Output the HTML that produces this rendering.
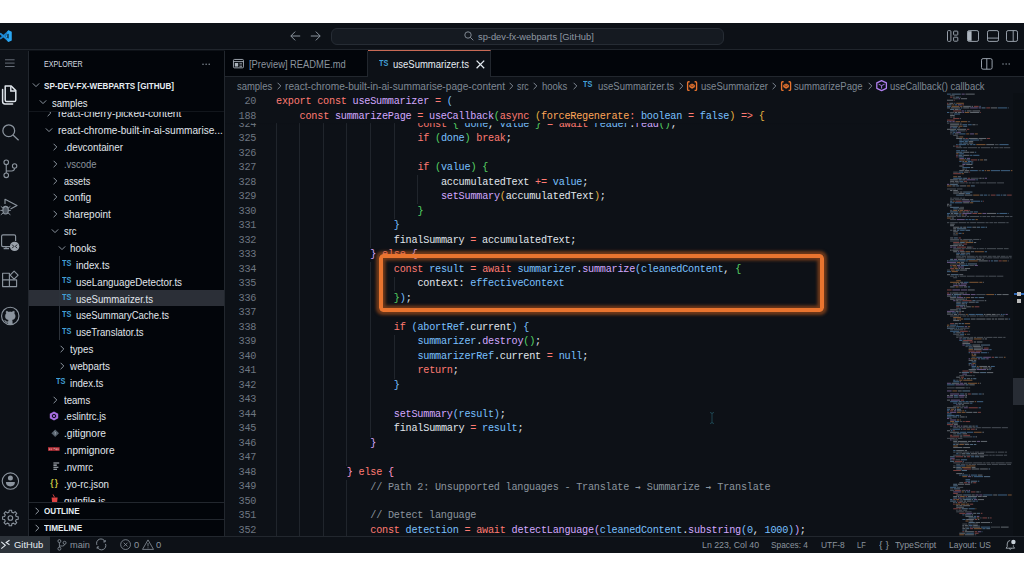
<!DOCTYPE html>
<html lang="en"><head><meta charset="utf-8"><title>useSummarizer.ts - sp-dev-fx-webparts [GitHub]</title>
<style>
html,body{margin:0;padding:0;background:#fff;}
body{width:1024px;height:576px;position:relative;overflow:hidden;font-family:"Liberation Sans",sans-serif;}
.abs{position:absolute;box-sizing:border-box;}
.t{position:absolute;white-space:pre;line-height:16px;height:16px;transform-origin:0 50%;}
.cl{position:absolute;white-space:pre;left:0;height:14.51px;line-height:14.51px;font-family:"Liberation Mono", monospace;font-size:10.20px;letter-spacing:-0.231px;color:#e0e6ec}
.ln{position:absolute;white-space:pre;text-align:right;width:40px;height:14.51px;line-height:14.51px;font-family:"Liberation Mono", monospace;font-size:10.20px;letter-spacing:-0.231px;color:#6e7681}
svg{position:absolute;overflow:visible}
.ar{display:inline-block;width:5.89px;letter-spacing:0;font-family:"DejaVu Sans Mono","Liberation Mono",monospace;font-size:9px;text-align:center;font-weight:700}
.k{color:#ff7b72}.f{color:#d2a8ff}.v{color:#79c0ff}.w{color:#e0e6ec}.p{color:#ffa657}.c{color:#8b949e}.b1{color:#79c0ff}.b2{color:#56d364}.b3{color:#e3b341}.b4{color:#ffa198}.b5{color:#ff9bce}.b6{color:#d2a8ff}</style></head>
<body>
<div class="abs" style="left:0;top:23.25px;width:1024px;height:529.25px;background:#0d1117"></div>
<div class="abs" style="left:0;top:23.25px;width:1024px;height:26.75px;background:#0d1117;border-bottom:1px solid #20252c"></div>
<div class="abs" style="left:28.50px;top:50.50px;width:195.50px;height:485.75px;background:#02050a"></div>
<div class="abs" style="left:28.00px;top:50.50px;width:1px;height:485.75px;background:#22272e"></div>
<div class="abs" style="left:223.50px;top:50.50px;width:1px;height:485.75px;background:#22272e"></div>
<div class="abs" style="left:224.50px;top:50.00px;width:800.00px;height:26.50px;background:#02050a;border-bottom:1px solid #22272e"></div>
<div class="abs" style="left:0;top:535.75px;width:1024px;height:16.75px;background:#0d1117;border-top:1px solid #22272e"></div>
<svg style="left:-1.20px;top:29.90px" width="13.10" height="12.30" viewBox="0 0 16 15" ><path d="M11.7 0.3 L0.4 10.2 L2.1 11.7 L12 4.1 Z" fill="#1b80c9"/><path d="M11.7 14.7 L0.4 4.8 L2.1 3.3 L12 10.9 Z" fill="#1f8fdc"/><path fill-rule="evenodd" d="M11.6 0.2 L15.6 2.1 V12.9 L11.6 14.8 L10.2 13.4 V1.6 Z M11.7 4.4 L7.6 7.5 L11.7 10.6 Z" fill="#2aa7f3"/></svg>
<svg style="left:289.70px;top:31.30px" width="11.00" height="10.00" viewBox="0 0 11 10" ><path d="M5.2 0.6 L0.8 5 L5.2 9.4 M0.9 5 H10.2" fill="none" stroke="#8b949e" stroke-width="1"/></svg>
<svg style="left:309.70px;top:31.30px" width="11.00" height="10.00" viewBox="0 0 11 10" ><path d="M5.8 0.6 L10.2 5 L5.8 9.4 M10.1 5 H0.8" fill="none" stroke="#8b949e" stroke-width="1"/></svg>
<div class="abs" style="left:331px;top:27.6px;width:393.2px;height:17.5px;border-radius:6px;background:#151a21;border:1px solid #262c34"></div>
<svg style="left:464.20px;top:30.70px" width="10.00" height="10.00" viewBox="0 0 10 10" ><circle cx="4" cy="4" r="3.2" fill="none" stroke="#8b949e" stroke-width="0.9"/><path d="M6.3 6.3 L9.3 9.3" stroke="#8b949e" stroke-width="0.9"/></svg>
<span class="t" style="left:478.00px;top:29.40px;font-size:9.60px;color:#8f98a2;transform:scaleX(0.9695);">sp-dev-fx-webparts [GitHub]</span>
<svg style="left:947.00px;top:30.00px" width="12.00" height="12.00" viewBox="0 0 12 12" ><rect x="0.5" y="0.6" width="3.4" height="10.8" rx="1" stroke="#9ea7b1" stroke-width="0.95" fill="none"/><rect x="6.6" y="1.1" width="4.2" height="4" rx="0.7" stroke="#9ea7b1" stroke-width="0.95" fill="none"/><rect x="6.6" y="7.2" width="4.2" height="4" rx="0.7" stroke="#9ea7b1" stroke-width="0.95" fill="none"/></svg>
<svg style="left:966.60px;top:30.00px" width="12.00" height="12.00" viewBox="0 0 12 12" ><rect x="0.5" y="0.6" width="11" height="10.8" rx="1.6" stroke="#9ea7b1" stroke-width="0.95" fill="none"/><path d="M0.8 1.2 H4.6 V10.8 H0.8 Z" fill="#aeb6bf"/></svg>
<svg style="left:986.60px;top:30.00px" width="12.00" height="12.00" viewBox="0 0 12 12" ><rect x="0.5" y="0.6" width="11" height="10.8" rx="1.6" stroke="#9ea7b1" stroke-width="0.95" fill="none"/><path d="M0.5 8.1 H11.5" stroke="#9ea7b1" stroke-width="0.95" fill="none"/></svg>
<svg style="left:1006.40px;top:30.00px" width="12.00" height="12.00" viewBox="0 0 12 12" ><rect x="0.5" y="0.6" width="11" height="10.8" rx="1.6" stroke="#9ea7b1" stroke-width="0.95" fill="none"/><path d="M7.2 0.6 V11.4" stroke="#9ea7b1" stroke-width="0.95" fill="none"/></svg>
<svg style="left:5.40px;top:58.00px" width="10.00" height="10.00" viewBox="0 0 10 10" ><path d="M0 1.8 H9.6 M0 5.1 H9.6 M0 8.5 H9.6" stroke="#7d8590" stroke-width="0.8"/></svg>
<svg style="left:0.20px;top:85.00px" width="18.00" height="20.00" viewBox="0 0 18 20" ><path d="M5.2 1 H11.2 L15.8 5.6 V15 Q15.8 16.6 14.2 16.6 H6.8 Q5.2 16.6 5.2 15 Z" fill="none" stroke="#dfe5eb" stroke-width="1.5" stroke-linejoin="round"/><path d="M10.8 1.2 V6 H15.6" fill="none" stroke="#dfe5eb" stroke-width="1.4"/><path d="M2.6 4.4 V16.6 Q2.6 19 5 19 H12.6" fill="none" stroke="#dfe5eb" stroke-width="1.5" stroke-linecap="round"/></svg>
<svg style="left:0.00px;top:122.00px" width="22.00" height="22.00" viewBox="0 0 22 22" ><circle cx="8.75" cy="8.7" r="5.9" fill="none" stroke="#8b949e" stroke-width="1.25"/><path d="M13 13 L18.6 18.2" stroke="#8b949e" stroke-width="1.25"/></svg>
<svg style="left:0.00px;top:158.00px" width="22.00" height="22.00" viewBox="0 0 22 22" ><circle cx="6.25" cy="4.3" r="2.3" fill="none" stroke="#8b949e" stroke-width="1.1"/><circle cx="6.25" cy="17.3" r="2.3" fill="none" stroke="#8b949e" stroke-width="1.1"/><circle cx="14.6" cy="8" r="2.2" fill="none" stroke="#8b949e" stroke-width="1.1"/><path d="M6.25 6.6 V15 M14.6 10.2 Q14.4 13 11.6 13 H6.3" fill="none" stroke="#8b949e" stroke-width="1.1"/></svg>
<svg style="left:0.00px;top:196.00px" width="22.00" height="22.00" viewBox="0 0 22 22" ><path d="M5 8 V3.2 L17 9.5 L10.5 13" fill="none" stroke="#8b949e" stroke-width="1.15" stroke-linejoin="round"/><ellipse cx="5.6" cy="14.2" rx="2.7" ry="3.8" fill="#4d555f" stroke="#8b949e" stroke-width="1.15"/><path d="M0.8 10.4 L3.2 12.2 M10.4 10.4 L8 12.2 M0.4 14.4 H2.9 M8.3 14.4 H10.8 M0.8 18.8 L3.3 16.8 M10.4 18.8 L7.9 16.8 M3.2 11.6 Q5.6 9.2 8 11.6" fill="none" stroke="#8b949e" stroke-width="1"/></svg>
<svg style="left:0.00px;top:232.00px" width="22.00" height="22.00" viewBox="0 0 22 22" ><path d="M10 14.6 H3 Q1.6 14.6 1.6 13.2 V4.2 Q1.6 2.8 3 2.8 H14.2 Q15.6 2.8 15.6 4.2 V9" fill="none" stroke="#8b949e" stroke-width="1.15"/><path d="M6 14.8 V16.4 M3.6 16.6 H9" stroke="#8b949e" stroke-width="1.1"/><circle cx="14.6" cy="14.4" r="4.7" fill="#9aa2ab"/><path d="M12.2 12.6 L13.8 14.4 L12.2 16.2 M17 12.6 L15.4 14.4 L17 16.2" fill="none" stroke="#0d1117" stroke-width="0.9"/></svg>
<svg style="left:0.00px;top:268.00px" width="22.00" height="22.00" viewBox="0 0 22 22" ><path d="M2.6 5.2 H9.4 V11.8 H16.6 V18.6 H2.6 Z M2.6 11.8 H9.4 V18.6" fill="none" stroke="#8b949e" stroke-width="1.15" stroke-linejoin="round"/><path d="M14.1 3.2 L18.1 7.2 L14.1 11.2 L10.1 7.2 Z" fill="none" stroke="#8b949e" stroke-width="1.15" stroke-linejoin="round"/></svg>
<svg style="left:0.00px;top:305.00px" width="22.00" height="22.00" viewBox="0 0 22 22" ><circle cx="10.25" cy="10.9" r="8.7" fill="none" stroke="#8b949e" stroke-width="1.1"/><path d="M6.3 6 Q7.6 6.1 8.6 7 Q10.25 6.6 11.9 7 Q12.9 6.1 14.2 6 Q14.7 7.4 14.3 8.6 Q15.3 9.8 15.3 11.3 Q15.3 14.6 11.9 14.9 Q12.4 15.5 12.4 16.4 V19.2 Q10.25 19.9 8.1 19.2 V17.6 Q5.9 18.1 5.2 16.4 Q4.9 15.7 4.3 15.3 Q5.3 15.1 5.9 16 Q6.7 17.1 8.1 16.6 Q8.2 15.5 8.6 14.9 Q5.2 14.6 5.2 11.3 Q5.2 9.8 6.2 8.6 Q5.8 7.4 6.3 6 Z" fill="#8b949e" stroke="#8b949e" stroke-width="0.3"/></svg>
<svg style="left:0.00px;top:470.00px" width="22.00" height="22.00" viewBox="0 0 22 22" ><circle cx="10.4" cy="11.1" r="8.2" fill="none" stroke="#8b949e" stroke-width="1.1"/><circle cx="10.4" cy="8.1" r="2.5" fill="#8b949e"/><path d="M5.9 12 H14.9 Q14.9 16.4 10.4 16.4 Q5.9 16.4 5.9 12 Z" fill="#8b949e"/></svg>
<svg style="left:0.00px;top:506.75px" width="22.00" height="22.00" viewBox="0 0 22 22" ><path d="M8.97 5.17 L9.22 3.19 L11.58 3.19 L11.83 5.17 L13.51 5.87 L15.09 4.64 L16.76 6.31 L15.53 7.89 L16.23 9.57 L18.21 9.82 L18.21 12.18 L16.23 12.43 L15.53 14.11 L16.76 15.69 L15.09 17.36 L13.51 16.13 L11.83 16.83 L11.58 18.81 L9.22 18.81 L8.97 16.83 L7.29 16.13 L5.71 17.36 L4.04 15.69 L5.27 14.11 L4.57 12.43 L2.59 12.18 L2.59 9.82 L4.57 9.57 L5.27 7.89 L4.04 6.31 L5.71 4.64 L7.29 5.87 Z" fill="none" stroke="#8b949e" stroke-width="1.1" stroke-linejoin="round"/><circle cx="10.40" cy="11.00" r="2.3" fill="none" stroke="#8b949e" stroke-width="1.1"/></svg>
<span class="t" style="left:44.00px;top:55.90px;font-size:9.00px;color:#d5dbe1;transform:scaleX(0.7903);">EXPLORER</span>
<svg style="left:202.00px;top:61.50px" width="10.00" height="5.00" viewBox="0 0 10 5" ><circle cx="1" cy="2.3" r="0.75" fill="#8b949e"/><circle cx="4.1" cy="2.3" r="0.75" fill="#8b949e"/><circle cx="7.2" cy="2.3" r="0.75" fill="#8b949e"/></svg>
<svg style="left:32.20px;top:81.20px" width="8.00" height="8.00" viewBox="0 0 8 8" ><path d="M0.8 2.4 L4 5.6 L7.2 2.4" fill="none" stroke="#8b949e" stroke-width="1.0"/></svg>
<span class="t" style="left:44.00px;top:77.80px;font-size:8.60px;color:#e6edf3;font-weight:700;transform:scaleX(0.9432);">SP-DEV-FX-WEBPARTS [GITHUB]</span>
<svg style="left:39.30px;top:97.80px" width="8.00" height="8.00" viewBox="0 0 8 8" ><path d="M0.8 2.4 L4 5.6 L7.2 2.4" fill="none" stroke="#8b949e" stroke-width="1.0"/></svg>
<span class="t" style="left:51.50px;top:96.00px;font-size:10.00px;color:#e6edf3;transform:scaleX(0.9530);">samples</span>
<div class="abs" style="left:28.50px;top:110.7px;width:195.00px;height:391.80px;overflow:hidden;border-top:1px solid #12161c">
<div class="abs" style="left:0;top:178.30px;width:196px;height:16.5px;background:#2b2f37"></div>
<div class="abs" style="left:30.90px;top:144.80px;width:1px;height:83.50px;background:#2c323a"></div>
<span class="t" style="left:29.25px;top:-5.40px;font-size:10.00px;color:#e0e6ec;transform:scaleX(1.0126);">react-cherry-picked-content</span>
<svg style="left:16.65px;top:-2.40px" width="8.00" height="8.00" viewBox="0 0 8 8" ><path d="M2.6 0.8 L5.8 4 L2.6 7.2" fill="none" stroke="#8b949e" stroke-width="1.0"/></svg>
<span class="t" style="left:29.25px;top:11.44px;font-size:10.00px;color:#e0e6ec;transform:scaleX(1.0084);">react-chrome-built-in-ai-summarise...</span>
<svg style="left:16.65px;top:14.34px" width="8.00" height="8.00" viewBox="0 0 8 8" ><path d="M0.8 2.4 L4 5.6 L7.2 2.4" fill="none" stroke="#8b949e" stroke-width="1.0"/></svg>
<span class="t" style="left:35.50px;top:28.28px;font-size:10.00px;color:#e0e6ec;transform:scaleX(0.9826);">.devcontainer</span>
<svg style="left:22.90px;top:31.28px" width="8.00" height="8.00" viewBox="0 0 8 8" ><path d="M2.6 0.8 L5.8 4 L2.6 7.2" fill="none" stroke="#8b949e" stroke-width="1.0"/></svg>
<span class="t" style="left:35.50px;top:45.12px;font-size:10.00px;color:#8b949e;transform:scaleX(0.9429);">.vscode</span>
<svg style="left:22.90px;top:48.12px" width="8.00" height="8.00" viewBox="0 0 8 8" ><path d="M2.6 0.8 L5.8 4 L2.6 7.2" fill="none" stroke="#8b949e" stroke-width="1.0"/></svg>
<span class="t" style="left:35.50px;top:61.96px;font-size:10.00px;color:#e0e6ec;transform:scaleX(0.9064);">assets</span>
<svg style="left:22.90px;top:64.96px" width="8.00" height="8.00" viewBox="0 0 8 8" ><path d="M2.6 0.8 L5.8 4 L2.6 7.2" fill="none" stroke="#8b949e" stroke-width="1.0"/></svg>
<span class="t" style="left:35.50px;top:78.80px;font-size:10.00px;color:#e0e6ec;transform:scaleX(1.0192);">config</span>
<svg style="left:22.90px;top:81.80px" width="8.00" height="8.00" viewBox="0 0 8 8" ><path d="M2.6 0.8 L5.8 4 L2.6 7.2" fill="none" stroke="#8b949e" stroke-width="1.0"/></svg>
<span class="t" style="left:35.50px;top:95.64px;font-size:10.00px;color:#e0e6ec;transform:scaleX(1.0021);">sharepoint</span>
<svg style="left:22.90px;top:98.64px" width="8.00" height="8.00" viewBox="0 0 8 8" ><path d="M2.6 0.8 L5.8 4 L2.6 7.2" fill="none" stroke="#8b949e" stroke-width="1.0"/></svg>
<span class="t" style="left:35.50px;top:112.48px;font-size:10.00px;color:#e0e6ec;transform:scaleX(0.9368);">src</span>
<svg style="left:22.90px;top:115.38px" width="8.00" height="8.00" viewBox="0 0 8 8" ><path d="M0.8 2.4 L4 5.6 L7.2 2.4" fill="none" stroke="#8b949e" stroke-width="1.0"/></svg>
<span class="t" style="left:41.75px;top:129.32px;font-size:10.00px;color:#e0e6ec;transform:scaleX(0.9836);">hooks</span>
<svg style="left:29.15px;top:132.22px" width="8.00" height="8.00" viewBox="0 0 8 8" ><path d="M0.8 2.4 L4 5.6 L7.2 2.4" fill="none" stroke="#8b949e" stroke-width="1.0"/></svg>
<span class="t" style="left:47.50px;top:146.16px;font-size:10.00px;color:#e0e6ec;transform:scaleX(0.9719);">index.ts</span>
<span class="t" style="left:33.30px;top:144.76px;font-size:8.2px;font-weight:700;color:#419fd6;transform:scaleX(0.9)">TS</span>
<span class="t" style="left:47.50px;top:163.00px;font-size:10.00px;color:#e0e6ec;transform:scaleX(0.9777);">useLanguageDetector.ts</span>
<span class="t" style="left:33.30px;top:161.60px;font-size:8.2px;font-weight:700;color:#419fd6;transform:scaleX(0.9)">TS</span>
<span class="t" style="left:47.50px;top:179.84px;font-size:10.00px;color:#e0e6ec;transform:scaleX(0.9621);">useSummarizer.ts</span>
<span class="t" style="left:33.30px;top:178.44px;font-size:8.2px;font-weight:700;color:#419fd6;transform:scaleX(0.9)">TS</span>
<span class="t" style="left:47.50px;top:196.68px;font-size:10.00px;color:#e0e6ec;transform:scaleX(0.9454);">useSummaryCache.ts</span>
<span class="t" style="left:33.30px;top:195.28px;font-size:8.2px;font-weight:700;color:#419fd6;transform:scaleX(0.9)">TS</span>
<span class="t" style="left:47.50px;top:213.52px;font-size:10.00px;color:#e0e6ec;transform:scaleX(0.9536);">useTranslator.ts</span>
<span class="t" style="left:33.30px;top:212.12px;font-size:8.2px;font-weight:700;color:#419fd6;transform:scaleX(0.9)">TS</span>
<span class="t" style="left:41.75px;top:230.36px;font-size:10.00px;color:#e0e6ec;transform:scaleX(0.9725);">types</span>
<svg style="left:29.15px;top:233.36px" width="8.00" height="8.00" viewBox="0 0 8 8" ><path d="M2.6 0.8 L5.8 4 L2.6 7.2" fill="none" stroke="#8b949e" stroke-width="1.0"/></svg>
<span class="t" style="left:41.75px;top:247.20px;font-size:10.00px;color:#e0e6ec;transform:scaleX(0.9870);">webparts</span>
<svg style="left:29.15px;top:250.20px" width="8.00" height="8.00" viewBox="0 0 8 8" ><path d="M2.6 0.8 L5.8 4 L2.6 7.2" fill="none" stroke="#8b949e" stroke-width="1.0"/></svg>
<span class="t" style="left:41.75px;top:264.04px;font-size:10.00px;color:#e0e6ec;transform:scaleX(0.9646);">index.ts</span>
<span class="t" style="left:27.55px;top:262.64px;font-size:8.2px;font-weight:700;color:#419fd6;transform:scaleX(0.9)">TS</span>
<span class="t" style="left:35.50px;top:280.88px;font-size:10.00px;color:#e0e6ec;transform:scaleX(0.9620);">teams</span>
<svg style="left:22.90px;top:283.88px" width="8.00" height="8.00" viewBox="0 0 8 8" ><path d="M2.6 0.8 L5.8 4 L2.6 7.2" fill="none" stroke="#8b949e" stroke-width="1.0"/></svg>
<span class="t" style="left:35.50px;top:297.72px;font-size:10.00px;color:#e0e6ec;transform:scaleX(0.9448);">.eslintrc.js</span>
<svg style="left:20.90px;top:299.72px" width="10.00" height="10.00" viewBox="0 0 10 10" ><path d="M5 0.4 L9.2 2.8 V7.2 L5 9.6 L0.8 7.2 V2.8 Z" fill="#a76ee0"/><path d="M5 2.7 L7.1 3.9 V6.1 L5 7.3 L2.9 6.1 V3.9 Z" fill="#02050a"/><path d="M5 3.7 L6.2 4.4 V5.6 L5 6.3 L3.8 5.6 V4.4 Z" fill="#a76ee0"/></svg>
<span class="t" style="left:35.50px;top:314.56px;font-size:10.00px;color:#e0e6ec;transform:scaleX(1.0209);">.gitignore</span>
<svg style="left:22.10px;top:317.16px" width="9.00" height="9.00" viewBox="0 0 9 9" ><path d="M4.2 0.4 L8 4.2 L4.2 8 L0.4 4.2 Z" fill="#56616c"/><path d="M3.4 2.6 L5 4.2 M4.2 3.4 V5.8" stroke="#b6bec7" stroke-width="0.6"/></svg>
<span class="t" style="left:35.50px;top:331.40px;font-size:10.00px;color:#e0e6ec;transform:scaleX(1.0094);">.npmignore</span>
<svg style="left:19.50px;top:335.10px" width="12.00" height="5.00" viewBox="0 0 12 5" ><rect x="0" y="0.2" width="11.6" height="3.6" fill="#b93139"/><path d="M1.6 1.4 V3.2 M3.2 1.4 V3.2 M5.4 1.4 H7 V3 M8.6 1.4 V3.2 M10 1.4 V3.2" stroke="#f3c6c8" stroke-width="0.6"/></svg>
<span class="t" style="left:35.50px;top:348.24px;font-size:10.00px;color:#e0e6ec;transform:scaleX(0.9667);">.nvmrc</span>
<svg style="left:24.10px;top:350.44px" width="8.00" height="9.00" viewBox="0 0 8 9" ><path d="M0.4 1 H6.2 M0.4 3.1 H3.8 M0.4 5.2 H5.4 M0.4 7.3 H4" stroke="#b9c0c8" stroke-width="1.05"/></svg>
<span class="t" style="left:35.50px;top:365.08px;font-size:10.00px;color:#e0e6ec;transform:scaleX(0.9756);">.yo-rc.json</span>
<span class="t" style="left:21.70px;top:363.38px;font-size:8.4px;font-weight:700;color:#c9c540;letter-spacing:1.3px">{}</span>
<span class="t" style="left:35.50px;top:381.92px;font-size:10.00px;color:#e0e6ec;transform:scaleX(0.9951);">gulpfile.js</span>
<svg style="left:22.30px;top:382.12px" width="8.00" height="12.00" viewBox="0 0 8 12" ><path d="M0.6 3.6 H6.6 L5.8 11 H1.4 Z" fill="#e04444"/><path d="M3.6 3.4 L2 0.4" stroke="#e04444" stroke-width="0.9"/></svg>
</div>
<div class="abs" style="left:28.50px;top:502px;width:195.50px;height:1px;background:#22272e"></div>
<div class="abs" style="left:28.50px;top:519px;width:195.50px;height:1px;background:#22272e"></div>
<svg style="left:32.60px;top:507.20px" width="8.00" height="8.00" viewBox="0 0 8 8" ><path d="M2.6 0.8 L5.8 4 L2.6 7.2" fill="none" stroke="#9aa2ab" stroke-width="1.0"/></svg>
<span class="t" style="left:43.75px;top:503.40px;font-size:8.60px;color:#e6edf3;font-weight:700;transform:scaleX(0.9425);">OUTLINE</span>
<svg style="left:32.60px;top:524.20px" width="8.00" height="8.00" viewBox="0 0 8 8" ><path d="M2.6 0.8 L5.8 4 L2.6 7.2" fill="none" stroke="#9aa2ab" stroke-width="1.0"/></svg>
<span class="t" style="left:43.75px;top:520.40px;font-size:8.60px;color:#e6edf3;font-weight:700;transform:scaleX(0.9536);">TIMELINE</span>
<svg style="left:233.00px;top:59.00px" width="11.00" height="9.50" viewBox="0 0 11 9.5" ><rect x="0.45" y="0.45" width="10" height="8.4" rx="1" fill="none" stroke="#aab2bb" stroke-width="0.9"/><path d="M0.5 2.6 H10.4" stroke="#aab2bb" stroke-width="0.9"/><rect x="1.8" y="4" width="3.4" height="3.6" fill="#aab2bb"/><path d="M6.4 4.4 H9 M6.4 6 H9 M6.4 7.5 H9" stroke="#aab2bb" stroke-width="0.7"/></svg>
<span class="t" style="left:248.75px;top:57.20px;font-size:10.00px;color:#8b949e;transform:scaleX(0.9361);">[Preview] README.md</span>
<div class="abs" style="left:367px;top:50.50px;width:1px;height:26.10px;background:#22272e"></div>
<div class="abs" style="left:367.75px;top:49.90px;width:123.5px;height:26.70px;background:#0d1117;border-top:1px solid #c96a55;border-right:1px solid #22272e"></div>
<span class="t" style="left:378.6px;top:56.1px;font-size:8.2px;font-weight:700;color:#419fd6;transform:scaleX(0.9)">TS</span>
<span class="t" style="left:393.00px;top:57.20px;font-size:10.00px;color:#e6edf3;transform:scaleX(0.9496);">useSummarizer.ts</span>
<svg style="left:476.00px;top:59.80px" width="9.00" height="9.00" viewBox="0 0 9 9" ><path d="M0.6 0.6 L8.2 8.2 M8.2 0.6 L0.6 8.2" stroke="#e6edf3" stroke-width="1.25"/></svg>
<svg style="left:981.00px;top:58.00px" width="12.00" height="12.00" viewBox="0 0 12 12" ><rect x="0.5" y="0.6" width="10.6" height="10.6" rx="1.6" fill="none" stroke="#9ea7b1" stroke-width="0.95"/><path d="M5.8 0.6 V11.2" stroke="#9ea7b1" stroke-width="0.95"/></svg>
<svg style="left:1002.00px;top:61.50px" width="10.00" height="5.00" viewBox="0 0 10 5" ><circle cx="1" cy="2.1" r="0.75" fill="#8b949e"/><circle cx="4.1" cy="2.1" r="0.75" fill="#8b949e"/><circle cx="7.2" cy="2.1" r="0.75" fill="#8b949e"/></svg>
<span class="t" style="left:236.50px;top:78.90px;font-size:10.00px;color:#7f8893;transform:scaleX(0.9450);">samples</span>
<svg style="left:274.60px;top:82.30px" width="8.00" height="8.00" viewBox="0 0 8 8" ><path d="M2.6 0.8 L5.8 4 L2.6 7.2" fill="none" stroke="#7f8893" stroke-width="1.0"/></svg>
<span class="t" style="left:284.50px;top:78.90px;font-size:10.00px;color:#7f8893;transform:scaleX(1.0150);">react-chrome-built-in-ai-summarise-page-content</span>
<svg style="left:507.00px;top:82.30px" width="8.00" height="8.00" viewBox="0 0 8 8" ><path d="M2.6 0.8 L5.8 4 L2.6 7.2" fill="none" stroke="#7f8893" stroke-width="1.0"/></svg>
<span class="t" style="left:517.00px;top:78.90px;font-size:10.00px;color:#7f8893;transform:scaleX(0.8768);">src</span>
<svg style="left:531.30px;top:82.30px" width="8.00" height="8.00" viewBox="0 0 8 8" ><path d="M2.6 0.8 L5.8 4 L2.6 7.2" fill="none" stroke="#7f8893" stroke-width="1.0"/></svg>
<span class="t" style="left:542.40px;top:78.90px;font-size:10.00px;color:#7f8893;transform:scaleX(0.9499);">hooks</span>
<svg style="left:571.00px;top:82.30px" width="8.00" height="8.00" viewBox="0 0 8 8" ><path d="M2.6 0.8 L5.8 4 L2.6 7.2" fill="none" stroke="#7f8893" stroke-width="1.0"/></svg>
<span class="t" style="left:583.4px;top:77.20px;font-size:8.2px;font-weight:700;color:#419fd6;transform:scaleX(0.9)">TS</span>
<span class="t" style="left:597.80px;top:78.90px;font-size:10.00px;color:#7f8893;transform:scaleX(0.9509);">useSummarizer.ts</span>
<svg style="left:676.60px;top:82.30px" width="8.00" height="8.00" viewBox="0 0 8 8" ><path d="M2.6 0.8 L5.8 4 L2.6 7.2" fill="none" stroke="#7f8893" stroke-width="1.0"/></svg>
<svg style="left:687.40px;top:80.90px" width="10.40" height="10.40" viewBox="0 0 10.4 10.4" ><path d="M2.6 0.8 H1.6 Q0.6 0.8 0.6 1.8 V8.4 Q0.6 9.4 1.6 9.4 H2.6 M7.6 0.8 H8.6 Q9.6 0.8 9.6 1.8 V8.4 Q9.6 9.4 8.6 9.4 H7.6" fill="none" stroke="#e8732e" stroke-width="1.35"/><path d="M5.1 2.9 L7.6 4.1 V6.1 L5.1 7.4 L2.6 6.1 V4.1 Z" fill="#e8732e" stroke="#e8732e" stroke-width="0.6" stroke-linejoin="round"/><path d="M3.4 4.6 L5.1 5.4 L6.8 4.6" fill="none" stroke="#0d1117" stroke-width="0.6"/></svg>
<span class="t" style="left:700.60px;top:78.90px;font-size:10.00px;color:#7f8893;transform:scaleX(0.9567);">useSummarizer</span>
<svg style="left:770.20px;top:82.30px" width="8.00" height="8.00" viewBox="0 0 8 8" ><path d="M2.6 0.8 L5.8 4 L2.6 7.2" fill="none" stroke="#7f8893" stroke-width="1.0"/></svg>
<svg style="left:781.10px;top:80.90px" width="10.40" height="10.40" viewBox="0 0 10.4 10.4" ><path d="M2.6 0.8 H1.6 Q0.6 0.8 0.6 1.8 V8.4 Q0.6 9.4 1.6 9.4 H2.6 M7.6 0.8 H8.6 Q9.6 0.8 9.6 1.8 V8.4 Q9.6 9.4 8.6 9.4 H7.6" fill="none" stroke="#e8732e" stroke-width="1.35"/><path d="M5.1 2.9 L7.6 4.1 V6.1 L5.1 7.4 L2.6 6.1 V4.1 Z" fill="#e8732e" stroke="#e8732e" stroke-width="0.6" stroke-linejoin="round"/><path d="M3.4 4.6 L5.1 5.4 L6.8 4.6" fill="none" stroke="#0d1117" stroke-width="0.6"/></svg>
<span class="t" style="left:794.30px;top:78.90px;font-size:10.00px;color:#7f8893;transform:scaleX(0.9479);">summarizePage</span>
<svg style="left:866.00px;top:82.30px" width="8.00" height="8.00" viewBox="0 0 8 8" ><path d="M2.6 0.8 L5.8 4 L2.6 7.2" fill="none" stroke="#7f8893" stroke-width="1.0"/></svg>
<svg style="left:875.80px;top:80.30px" width="11.40" height="11.60" viewBox="0 0 11.4 11.6" ><path d="M5.6 0.7 L10.4 2.9 V8.3 L5.6 10.7 L0.8 8.3 V2.9 Z" fill="none" stroke="#b180f0" stroke-width="1.3" stroke-linejoin="round"/><path d="M2.6 4.2 L5.6 5.6 L8.6 4.2 M5.6 5.6 V8.6" fill="none" stroke="#b180f0" stroke-width="0.9"/></svg>
<span class="t" style="left:890.00px;top:78.90px;font-size:10.00px;color:#7f8893;transform:scaleX(0.9456);">useCallback() callback</span>
<div class="abs" style="left:224.50px;top:122.70px;width:722.00px;height:413.05px;overflow:hidden">
<div class="abs" style="left:51.25px;top:-5.31px;width:1px;height:9794.25px;background:#20252c"></div>
<div class="abs" style="left:74.81px;top:-5.31px;width:1px;height:9794.25px;background:#20252c"></div>
<div class="abs" style="left:98.37px;top:-5.31px;width:1px;height:9794.25px;background:#20252c"></div>
<div class="abs" style="left:121.93px;top:-5.31px;width:1px;height:348.24px;background:#20252c"></div>
<div class="abs" style="left:121.93px;top:357.44px;width:1px;height:9431.50px;background:#20252c"></div>
<div class="abs" style="left:145.49px;top:-5.31px;width:1px;height:130.59px;background:#20252c"></div>
<div class="abs" style="left:145.49px;top:139.79px;width:1px;height:174.12px;background:#20252c"></div>
<div class="abs" style="left:169.05px;top:-5.31px;width:1px;height:101.57px;background:#20252c"></div>
<div class="abs" style="left:169.05px;top:154.30px;width:1px;height:14.51px;background:#20252c"></div>
<div class="abs" style="left:169.05px;top:212.33px;width:1px;height:43.53px;background:#20252c"></div>
<div class="abs" style="left:192.61px;top:52.73px;width:1px;height:29.02px;background:#20252c"></div>
<div class="ln" style="left:-8.30px;top:-5.01px">324</div>
<div class="cl" style="left:192.91px;top:-5.01px"><span class="k">const</span> <span class="b2">{</span> <span class="v">done</span>, <span class="v">value</span> <span class="b2">}</span> <span class="k">=</span> <span class="k">await</span> <span class="v">reader</span>.<span class="f">read</span><span class="b2">()</span>;</div>
<div class="ln" style="left:-8.30px;top:9.50px">325</div>
<div class="cl" style="left:192.91px;top:9.50px"><span class="k">if</span> <span class="b2">(</span><span class="v">done</span><span class="b2">)</span> <span class="k">break</span>;</div>
<div class="ln" style="left:-8.30px;top:24.00px">326</div>
<div class="ln" style="left:-8.30px;top:38.52px">327</div>
<div class="cl" style="left:192.91px;top:38.52px"><span class="k">if</span> <span class="b2">(</span><span class="v">value</span><span class="b2">)</span> <span class="b2">{</span></div>
<div class="ln" style="left:-8.30px;top:53.03px">328</div>
<div class="cl" style="left:216.47px;top:53.03px">accumulatedText <span class="k">+=</span> <span class="v">value</span>;</div>
<div class="ln" style="left:-8.30px;top:67.53px">329</div>
<div class="cl" style="left:216.47px;top:67.53px"><span class="f">setSummary</span><span class="b3">(</span>accumulatedText<span class="b3">)</span>;</div>
<div class="ln" style="left:-8.30px;top:82.04px">330</div>
<div class="cl" style="left:192.91px;top:82.04px"><span class="b2">}</span></div>
<div class="ln" style="left:-8.30px;top:96.56px">331</div>
<div class="cl" style="left:169.35px;top:96.56px"><span class="b1">}</span></div>
<div class="ln" style="left:-8.30px;top:111.06px">332</div>
<div class="cl" style="left:169.35px;top:111.06px">finalSummary <span class="k">=</span> accumulatedText;</div>
<div class="ln" style="left:-8.30px;top:125.58px">333</div>
<div class="cl" style="left:145.79px;top:125.58px"><span class="b6">}</span> <span class="k">else</span> <span class="b6">{</span></div>
<div class="ln" style="left:-8.30px;top:140.09px">334</div>
<div class="cl" style="left:169.35px;top:140.09px"><span class="k">const</span> <span class="v">result</span> <span class="k">=</span> <span class="k">await</span> <span class="v">summarizer</span>.<span class="f">summarize</span><span class="b1">(</span><span class="v">cleanedContent</span>, <span class="b2">{</span></div>
<div class="ln" style="left:-8.30px;top:154.60px">335</div>
<div class="cl" style="left:192.91px;top:154.60px">context: <span class="v">effectiveContext</span></div>
<div class="ln" style="left:-8.30px;top:169.11px">336</div>
<div class="cl" style="left:169.35px;top:169.11px"><span class="b2">}</span><span class="b1">)</span>;</div>
<div class="ln" style="left:-8.30px;top:183.62px">337</div>
<div class="ln" style="left:-8.30px;top:198.12px">338</div>
<div class="cl" style="left:169.35px;top:198.12px"><span class="k">if</span> <span class="b1">(</span><span class="v">abortRef</span>.current<span class="b1">)</span> <span class="b1">{</span></div>
<div class="ln" style="left:-8.30px;top:212.63px">339</div>
<div class="cl" style="left:192.91px;top:212.63px"><span class="v">summarizer</span>.<span class="f">destroy</span><span class="b2">()</span>;</div>
<div class="ln" style="left:-8.30px;top:227.15px">340</div>
<div class="cl" style="left:192.91px;top:227.15px"><span class="v">summarizerRef</span>.current <span class="k">=</span> <span class="v">null</span>;</div>
<div class="ln" style="left:-8.30px;top:241.66px">341</div>
<div class="cl" style="left:192.91px;top:241.66px"><span class="k">return</span>;</div>
<div class="ln" style="left:-8.30px;top:256.17px">342</div>
<div class="cl" style="left:169.35px;top:256.17px"><span class="b1">}</span></div>
<div class="ln" style="left:-8.30px;top:270.68px">343</div>
<div class="ln" style="left:-8.30px;top:285.19px">344</div>
<div class="cl" style="left:169.35px;top:285.19px"><span class="f">setSummary</span><span class="b1">(</span><span class="v">result</span><span class="b1">)</span>;</div>
<div class="ln" style="left:-8.30px;top:299.70px">345</div>
<div class="cl" style="left:169.35px;top:299.70px">finalSummary <span class="k">=</span> <span class="v">result</span>;</div>
<div class="ln" style="left:-8.30px;top:314.21px">346</div>
<div class="cl" style="left:145.79px;top:314.21px"><span class="b6">}</span></div>
<div class="ln" style="left:-8.30px;top:328.72px">347</div>
<div class="ln" style="left:-8.30px;top:343.23px">348</div>
<div class="cl" style="left:122.23px;top:343.23px"><span class="b5">}</span> <span class="k">else</span> <span class="b5">{</span></div>
<div class="ln" style="left:-8.30px;top:357.74px">349</div>
<div class="cl" style="left:145.79px;top:357.74px"><span class="c">// Path 2: Unsupported languages - Translate <span class="ar">→</span> Summarize <span class="ar">→</span> Translate</span></div>
<div class="ln" style="left:-8.30px;top:372.25px">350</div>
<div class="ln" style="left:-8.30px;top:386.75px">351</div>
<div class="cl" style="left:145.79px;top:386.75px"><span class="c">// Detect language</span></div>
<div class="ln" style="left:-8.30px;top:401.26px">352</div>
<div class="cl" style="left:145.79px;top:401.26px"><span class="k">const</span> <span class="v">detection</span> <span class="k">=</span> <span class="k">await</span> <span class="f">detectLanguage</span><span class="b6">(</span><span class="v">cleanedContent</span>.<span class="f">substring</span><span class="b1">(</span><span class="v">0</span>, <span class="v">1000</span><span class="b1">)</span><span class="b6">)</span>;</div>
</div>
<div class="abs" style="left:224.50px;top:122.70px;width:722.00px;height:2.5px;background:linear-gradient(rgba(1,4,9,0.12),rgba(1,4,9,0))"></div>
<div class="ln" style="left:216.20px;top:94.64px">20</div>
<div class="cl" style="left:276.05px;top:94.64px"><span class="k">export</span> <span class="k">const</span> <span class="f">useSummarizer</span> <span class="k">=</span> <span class="b1">(</span></div>
<div class="ln" style="left:216.20px;top:109.84px">188</div>
<div class="cl" style="left:299.61px;top:109.84px"><span class="k">const</span> <span class="f">summarizePage</span> <span class="k">=</span> <span class="f">useCallback</span><span class="b2">(</span><span class="k">async</span> <span class="b3">(</span><span class="p">forceRegenerate</span><span class="k">:</span> <span class="v">boolean</span> <span class="k">=</span> <span class="v">false</span><span class="b3">)</span> <span class="k">=&gt;</span> <span class="b3">{</span></div>
<div class="abs" style="left:378.7px;top:254px;width:445.6px;height:58.2px;border:4px solid #e9742f;border-radius:4.5px;box-shadow:0 0 3px 2.2px rgba(205,95,30,0.5),inset 0 0 3px 2.6px rgba(205,95,30,0.5)"></div>
<svg style="left:946.00px;top:93.00px" width="67.00" height="443.00" viewBox="0 0 67 443" ><g opacity="0.44"><rect x="1.0" y="0.60" width="3.9" height="1.05" fill="#79c0ff"/><rect x="5.6" y="0.60" width="9.2" height="1.05" fill="#a5d6ff"/><rect x="15.6" y="0.60" width="3.1" height="1.05" fill="#d2a8ff"/><rect x="19.5" y="0.60" width="9.2" height="1.05" fill="#c9d1d9"/><rect x="4.1" y="2.13" width="4.6" height="1.05" fill="#8b949e"/><rect x="4.1" y="3.66" width="2.3" height="1.05" fill="#ff7b72"/><rect x="7.2" y="3.66" width="1.5" height="1.05" fill="#c9d1d9"/><rect x="9.5" y="3.66" width="3.9" height="1.05" fill="#a5d6ff"/><rect x="14.1" y="3.66" width="0.8" height="1.05" fill="#8b949e"/><rect x="7.2" y="5.19" width="4.6" height="1.05" fill="#8b949e"/><rect x="12.5" y="5.19" width="1.5" height="1.05" fill="#d2a8ff"/><rect x="14.9" y="5.19" width="6.2" height="1.05" fill="#c9d1d9"/><rect x="1.0" y="6.72" width="6.2" height="1.05" fill="#c9d1d9"/><rect x="7.9" y="6.72" width="0.8" height="1.05" fill="#ff7b72"/><rect x="1.0" y="9.78" width="1.5" height="1.05" fill="#ff7b72"/><rect x="3.3" y="9.78" width="3.9" height="1.05" fill="#c9d1d9"/><rect x="7.9" y="9.78" width="1.5" height="1.05" fill="#8b949e"/><rect x="10.2" y="9.78" width="7.7" height="1.05" fill="#ffa657"/><rect x="1.0" y="11.31" width="4.6" height="1.05" fill="#c9d1d9"/><rect x="6.4" y="11.31" width="1.5" height="1.05" fill="#ffa657"/><rect x="8.7" y="11.31" width="2.3" height="1.05" fill="#79c0ff"/><rect x="11.8" y="11.31" width="3.9" height="1.05" fill="#d2a8ff"/><rect x="16.4" y="11.31" width="1.5" height="1.05" fill="#ff7b72"/><rect x="1.0" y="12.84" width="3.9" height="1.05" fill="#79c0ff"/><rect x="5.6" y="12.84" width="7.7" height="1.05" fill="#ffa657"/><rect x="14.1" y="12.84" width="2.3" height="1.05" fill="#ffa657"/><rect x="17.2" y="12.84" width="7.7" height="1.05" fill="#c9d1d9"/><rect x="25.6" y="12.84" width="1.5" height="1.05" fill="#c9d1d9"/><rect x="28.0" y="12.84" width="4.6" height="1.05" fill="#ff7b72"/><rect x="33.3" y="12.84" width="1.5" height="1.05" fill="#79c0ff"/><rect x="1.0" y="14.37" width="3.1" height="1.05" fill="#c9d1d9"/><rect x="4.9" y="14.37" width="9.2" height="1.05" fill="#c9d1d9"/><rect x="14.9" y="14.37" width="1.5" height="1.05" fill="#a5d6ff"/><rect x="17.2" y="14.37" width="6.2" height="1.05" fill="#c9d1d9"/><rect x="24.1" y="14.37" width="7.7" height="1.05" fill="#d2a8ff"/><rect x="32.6" y="14.37" width="2.3" height="1.05" fill="#d2a8ff"/><rect x="35.6" y="14.37" width="3.9" height="1.05" fill="#a5d6ff"/><rect x="40.3" y="14.37" width="3.9" height="1.05" fill="#ff7b72"/><rect x="44.9" y="14.37" width="6.2" height="1.05" fill="#c9d1d9"/><rect x="51.8" y="14.37" width="9.2" height="1.05" fill="#79c0ff"/><rect x="61.8" y="14.37" width="0.8" height="1.05" fill="#a5d6ff"/><rect x="4.1" y="15.90" width="3.9" height="1.05" fill="#a5d6ff"/><rect x="8.7" y="15.90" width="3.9" height="1.05" fill="#c9d1d9"/><rect x="13.3" y="15.90" width="1.5" height="1.05" fill="#79c0ff"/><rect x="7.2" y="17.43" width="7.7" height="1.05" fill="#ff7b72"/><rect x="15.6" y="17.43" width="2.3" height="1.05" fill="#d2a8ff"/><rect x="18.7" y="17.43" width="1.5" height="1.05" fill="#79c0ff"/><rect x="21.0" y="17.43" width="4.6" height="1.05" fill="#c9d1d9"/><rect x="26.4" y="17.43" width="7.7" height="1.05" fill="#c9d1d9"/><rect x="1.0" y="18.96" width="2.3" height="1.05" fill="#79c0ff"/><rect x="4.1" y="18.96" width="3.9" height="1.05" fill="#8b949e"/><rect x="8.7" y="18.96" width="2.3" height="1.05" fill="#c9d1d9"/><rect x="11.8" y="18.96" width="3.9" height="1.05" fill="#c9d1d9"/><rect x="16.4" y="18.96" width="1.5" height="1.05" fill="#d2a8ff"/><rect x="18.7" y="18.96" width="4.6" height="1.05" fill="#ffa657"/><rect x="24.1" y="18.96" width="9.2" height="1.05" fill="#c9d1d9"/><rect x="34.1" y="18.96" width="0.8" height="1.05" fill="#ff7b72"/><rect x="4.1" y="20.49" width="3.1" height="1.05" fill="#8b949e"/><rect x="7.9" y="20.49" width="6.2" height="1.05" fill="#79c0ff"/><rect x="4.1" y="22.02" width="4.6" height="1.05" fill="#c9d1d9"/><rect x="4.1" y="23.55" width="2.3" height="1.05" fill="#8b949e"/><rect x="7.2" y="23.55" width="1.5" height="1.05" fill="#c9d1d9"/><rect x="7.2" y="25.08" width="6.2" height="1.05" fill="#ff7b72"/><rect x="14.1" y="25.08" width="0.8" height="1.05" fill="#c9d1d9"/><rect x="1.0" y="26.61" width="7.7" height="1.05" fill="#ff7b72"/><rect x="1.0" y="28.14" width="1.5" height="1.05" fill="#a5d6ff"/><rect x="3.3" y="28.14" width="2.3" height="1.05" fill="#d2a8ff"/><rect x="6.4" y="28.14" width="2.3" height="1.05" fill="#d2a8ff"/><rect x="9.5" y="28.14" width="4.6" height="1.05" fill="#ffa657"/><rect x="14.9" y="28.14" width="6.2" height="1.05" fill="#ffa657"/><rect x="21.8" y="28.14" width="2.3" height="1.05" fill="#8b949e"/><rect x="1.0" y="29.67" width="2.3" height="1.05" fill="#8b949e"/><rect x="4.1" y="29.67" width="9.2" height="1.05" fill="#8b949e"/><rect x="14.1" y="29.67" width="1.5" height="1.05" fill="#8b949e"/><rect x="4.1" y="31.20" width="9.2" height="1.05" fill="#c9d1d9"/><rect x="14.1" y="31.20" width="1.5" height="1.05" fill="#c9d1d9"/><rect x="16.4" y="31.20" width="4.6" height="1.05" fill="#79c0ff"/><rect x="21.8" y="31.20" width="3.9" height="1.05" fill="#79c0ff"/><rect x="26.4" y="31.20" width="3.1" height="1.05" fill="#c9d1d9"/><rect x="30.3" y="31.20" width="1.5" height="1.05" fill="#8b949e"/><rect x="4.1" y="32.73" width="7.7" height="1.05" fill="#c9d1d9"/><rect x="12.6" y="32.73" width="3.9" height="1.05" fill="#ffa657"/><rect x="17.2" y="32.73" width="3.9" height="1.05" fill="#a5d6ff"/><rect x="4.1" y="34.26" width="1.5" height="1.05" fill="#d2a8ff"/><rect x="6.4" y="34.26" width="4.6" height="1.05" fill="#79c0ff"/><rect x="11.8" y="34.26" width="2.3" height="1.05" fill="#8b949e"/><rect x="1.0" y="35.79" width="9.2" height="1.05" fill="#c9d1d9"/><rect x="11.0" y="35.79" width="9.2" height="1.05" fill="#c9d1d9"/><rect x="21.0" y="35.79" width="2.3" height="1.05" fill="#ff7b72"/><rect x="4.1" y="37.32" width="4.6" height="1.05" fill="#a5d6ff"/><rect x="9.5" y="37.32" width="1.5" height="1.05" fill="#79c0ff"/><rect x="11.8" y="37.32" width="7.7" height="1.05" fill="#8b949e"/><rect x="20.2" y="37.32" width="0.8" height="1.05" fill="#ff7b72"/><rect x="4.1" y="38.85" width="2.3" height="1.05" fill="#8b949e"/><rect x="7.2" y="38.85" width="2.3" height="1.05" fill="#79c0ff"/><rect x="10.2" y="38.85" width="4.6" height="1.05" fill="#d2a8ff"/><rect x="4.1" y="40.38" width="1.5" height="1.05" fill="#8b949e"/><rect x="6.4" y="40.38" width="1.5" height="1.05" fill="#79c0ff"/><rect x="8.7" y="40.38" width="3.9" height="1.05" fill="#c9d1d9"/><rect x="13.3" y="40.38" width="6.2" height="1.05" fill="#79c0ff"/><rect x="20.2" y="40.38" width="3.1" height="1.05" fill="#ffa657"/><rect x="24.1" y="40.38" width="3.9" height="1.05" fill="#d2a8ff"/><rect x="28.7" y="40.38" width="3.1" height="1.05" fill="#ffa657"/><rect x="7.2" y="41.91" width="4.6" height="1.05" fill="#8b949e"/><rect x="10.2" y="43.44" width="2.3" height="1.05" fill="#c9d1d9"/><rect x="13.3" y="43.44" width="3.9" height="1.05" fill="#ffa657"/><rect x="10.2" y="44.97" width="6.2" height="1.05" fill="#c9d1d9"/><rect x="17.2" y="44.97" width="1.5" height="1.05" fill="#c9d1d9"/><rect x="19.5" y="44.97" width="2.3" height="1.05" fill="#ff7b72"/><rect x="22.6" y="44.97" width="9.2" height="1.05" fill="#c9d1d9"/><rect x="32.6" y="44.97" width="7.7" height="1.05" fill="#c9d1d9"/><rect x="41.0" y="44.97" width="3.1" height="1.05" fill="#ff7b72"/><rect x="13.3" y="46.50" width="3.1" height="1.05" fill="#79c0ff"/><rect x="17.2" y="46.50" width="6.2" height="1.05" fill="#79c0ff"/><rect x="24.1" y="46.50" width="9.2" height="1.05" fill="#79c0ff"/><rect x="34.1" y="46.50" width="2.3" height="1.05" fill="#8b949e"/><rect x="13.3" y="48.03" width="4.6" height="1.05" fill="#79c0ff"/><rect x="18.7" y="48.03" width="3.1" height="1.05" fill="#79c0ff"/><rect x="22.6" y="48.03" width="4.6" height="1.05" fill="#c9d1d9"/><rect x="13.3" y="49.56" width="3.1" height="1.05" fill="#79c0ff"/><rect x="17.2" y="49.56" width="4.6" height="1.05" fill="#a5d6ff"/><rect x="22.6" y="49.56" width="4.6" height="1.05" fill="#c9d1d9"/><rect x="10.2" y="51.09" width="1.5" height="1.05" fill="#79c0ff"/><rect x="12.5" y="51.09" width="7.7" height="1.05" fill="#79c0ff"/><rect x="21.0" y="51.09" width="2.3" height="1.05" fill="#8b949e"/><rect x="24.1" y="51.09" width="2.3" height="1.05" fill="#79c0ff"/><rect x="27.2" y="51.09" width="2.3" height="1.05" fill="#79c0ff"/><rect x="30.3" y="51.09" width="9.2" height="1.05" fill="#ffa657"/><rect x="40.3" y="51.09" width="7.7" height="1.05" fill="#c9d1d9"/><rect x="48.7" y="51.09" width="3.9" height="1.05" fill="#8b949e"/><rect x="53.4" y="51.09" width="9.2" height="1.05" fill="#79c0ff"/><rect x="7.2" y="52.62" width="1.5" height="1.05" fill="#c9d1d9"/><rect x="9.5" y="52.62" width="3.1" height="1.05" fill="#ff7b72"/><rect x="13.3" y="52.62" width="1.5" height="1.05" fill="#c9d1d9"/><rect x="10.2" y="54.15" width="6.2" height="1.05" fill="#8b949e"/><rect x="17.2" y="54.15" width="3.9" height="1.05" fill="#8b949e"/><rect x="21.8" y="54.15" width="9.2" height="1.05" fill="#8b949e"/><rect x="31.8" y="54.15" width="2.3" height="1.05" fill="#8b949e"/><rect x="34.9" y="54.15" width="9.2" height="1.05" fill="#8b949e"/><rect x="44.9" y="54.15" width="2.3" height="1.05" fill="#8b949e"/><rect x="48.0" y="54.15" width="4.6" height="1.05" fill="#8b949e"/><rect x="53.4" y="54.15" width="3.9" height="1.05" fill="#8b949e"/><rect x="58.0" y="54.15" width="6.2" height="1.05" fill="#8b949e"/><rect x="10.2" y="57.21" width="3.9" height="1.05" fill="#79c0ff"/><rect x="14.9" y="57.21" width="3.9" height="1.05" fill="#79c0ff"/><rect x="19.5" y="57.21" width="1.5" height="1.05" fill="#c9d1d9"/><rect x="10.2" y="58.74" width="6.2" height="1.05" fill="#a5d6ff"/><rect x="17.2" y="58.74" width="6.2" height="1.05" fill="#c9d1d9"/><rect x="24.1" y="58.74" width="3.9" height="1.05" fill="#c9d1d9"/><rect x="28.7" y="58.74" width="1.5" height="1.05" fill="#79c0ff"/><rect x="10.2" y="60.27" width="2.3" height="1.05" fill="#ffa657"/><rect x="13.3" y="60.27" width="4.6" height="1.05" fill="#79c0ff"/><rect x="10.2" y="61.80" width="1.5" height="1.05" fill="#d2a8ff"/><rect x="12.5" y="61.80" width="3.9" height="1.05" fill="#a5d6ff"/><rect x="17.2" y="61.80" width="6.2" height="1.05" fill="#c9d1d9"/><rect x="24.1" y="61.80" width="2.3" height="1.05" fill="#79c0ff"/><rect x="27.2" y="61.80" width="6.2" height="1.05" fill="#79c0ff"/><rect x="10.2" y="63.33" width="1.5" height="1.05" fill="#ff7b72"/><rect x="12.5" y="63.33" width="5.4" height="1.05" fill="#79c0ff"/><rect x="13.3" y="64.86" width="4.6" height="1.05" fill="#d2a8ff"/><rect x="18.7" y="64.86" width="1.5" height="1.05" fill="#79c0ff"/><rect x="21.0" y="64.86" width="3.1" height="1.05" fill="#d2a8ff"/><rect x="13.3" y="66.39" width="6.2" height="1.05" fill="#ffa657"/><rect x="20.2" y="66.39" width="3.9" height="1.05" fill="#a5d6ff"/><rect x="24.9" y="66.39" width="6.2" height="1.05" fill="#ff7b72"/><rect x="31.8" y="66.39" width="1.5" height="1.05" fill="#c9d1d9"/><rect x="34.1" y="66.39" width="3.1" height="1.05" fill="#ffa657"/><rect x="38.0" y="66.39" width="3.1" height="1.05" fill="#c9d1d9"/><rect x="13.3" y="67.92" width="2.3" height="1.05" fill="#79c0ff"/><rect x="16.4" y="67.92" width="1.5" height="1.05" fill="#c9d1d9"/><rect x="18.7" y="67.92" width="2.3" height="1.05" fill="#ffa657"/><rect x="21.8" y="67.92" width="3.9" height="1.05" fill="#79c0ff"/><rect x="26.4" y="67.92" width="0.8" height="1.05" fill="#c9d1d9"/><rect x="16.4" y="69.45" width="7.7" height="1.05" fill="#79c0ff"/><rect x="24.9" y="69.45" width="2.3" height="1.05" fill="#79c0ff"/><rect x="16.4" y="70.98" width="3.1" height="1.05" fill="#d2a8ff"/><rect x="20.2" y="70.98" width="6.2" height="1.05" fill="#c9d1d9"/><rect x="13.3" y="72.51" width="4.6" height="1.05" fill="#c9d1d9"/><rect x="16.4" y="74.04" width="7.7" height="1.05" fill="#79c0ff"/><rect x="24.9" y="74.04" width="2.3" height="1.05" fill="#c9d1d9"/><rect x="16.4" y="75.57" width="2.3" height="1.05" fill="#c9d1d9"/><rect x="19.5" y="75.57" width="1.5" height="1.05" fill="#8b949e"/><rect x="13.3" y="77.10" width="4.6" height="1.05" fill="#c9d1d9"/><rect x="18.7" y="77.10" width="4.6" height="1.05" fill="#c9d1d9"/><rect x="24.1" y="77.10" width="7.7" height="1.05" fill="#79c0ff"/><rect x="32.6" y="77.10" width="2.3" height="1.05" fill="#8b949e"/><rect x="35.7" y="77.10" width="2.3" height="1.05" fill="#79c0ff"/><rect x="38.7" y="77.10" width="1.5" height="1.05" fill="#ffa657"/><rect x="41.0" y="77.10" width="3.1" height="1.05" fill="#ffa657"/><rect x="44.9" y="77.10" width="9.2" height="1.05" fill="#79c0ff"/><rect x="54.9" y="77.10" width="9.2" height="1.05" fill="#79c0ff"/><rect x="64.9" y="77.10" width="1.5" height="1.05" fill="#ffa657"/><rect x="7.2" y="78.63" width="4.6" height="1.05" fill="#8b949e"/><rect x="12.5" y="78.63" width="4.6" height="1.05" fill="#79c0ff"/><rect x="17.9" y="78.63" width="4.6" height="1.05" fill="#c9d1d9"/><rect x="23.3" y="78.63" width="0.8" height="1.05" fill="#ff7b72"/><rect x="7.2" y="80.16" width="7.7" height="1.05" fill="#ff7b72"/><rect x="15.6" y="80.16" width="2.3" height="1.05" fill="#ffa657"/><rect x="7.2" y="83.22" width="3.9" height="1.05" fill="#ffa657"/><rect x="11.8" y="83.22" width="3.1" height="1.05" fill="#c9d1d9"/><rect x="7.2" y="84.75" width="9.2" height="1.05" fill="#79c0ff"/><rect x="17.2" y="84.75" width="3.9" height="1.05" fill="#a5d6ff"/><rect x="21.8" y="84.75" width="2.3" height="1.05" fill="#ff7b72"/><rect x="24.9" y="84.75" width="7.7" height="1.05" fill="#8b949e"/><rect x="33.3" y="84.75" width="2.3" height="1.05" fill="#c9d1d9"/><rect x="36.4" y="84.75" width="1.5" height="1.05" fill="#c9d1d9"/><rect x="38.7" y="84.75" width="2.3" height="1.05" fill="#d2a8ff"/><rect x="4.1" y="86.28" width="7.7" height="1.05" fill="#c9d1d9"/><rect x="12.6" y="86.28" width="3.1" height="1.05" fill="#c9d1d9"/><rect x="16.4" y="86.28" width="3.1" height="1.05" fill="#c9d1d9"/><rect x="20.3" y="86.28" width="9.2" height="1.05" fill="#d2a8ff"/><rect x="30.3" y="86.28" width="1.5" height="1.05" fill="#79c0ff"/><rect x="4.1" y="87.81" width="3.9" height="1.05" fill="#c9d1d9"/><rect x="8.7" y="87.81" width="3.9" height="1.05" fill="#c9d1d9"/><rect x="13.3" y="87.81" width="3.9" height="1.05" fill="#79c0ff"/><rect x="17.9" y="87.81" width="3.1" height="1.05" fill="#ff7b72"/><rect x="4.1" y="89.34" width="1.5" height="1.05" fill="#8b949e"/><rect x="6.4" y="89.34" width="2.3" height="1.05" fill="#8b949e"/><rect x="9.5" y="89.34" width="3.9" height="1.05" fill="#8b949e"/><rect x="14.1" y="89.34" width="4.6" height="1.05" fill="#8b949e"/><rect x="19.5" y="89.34" width="2.3" height="1.05" fill="#8b949e"/><rect x="22.6" y="89.34" width="2.3" height="1.05" fill="#8b949e"/><rect x="25.6" y="89.34" width="3.1" height="1.05" fill="#8b949e"/><rect x="29.5" y="89.34" width="3.9" height="1.05" fill="#8b949e"/><rect x="34.1" y="89.34" width="6.2" height="1.05" fill="#8b949e"/><rect x="41.0" y="89.34" width="9.2" height="1.05" fill="#8b949e"/><rect x="51.1" y="89.34" width="6.9" height="1.05" fill="#8b949e"/><rect x="1.0" y="90.87" width="2.3" height="1.05" fill="#d2a8ff"/><rect x="4.1" y="90.87" width="7.7" height="1.05" fill="#a5d6ff"/><rect x="1.0" y="92.40" width="4.6" height="1.05" fill="#ffa657"/><rect x="6.4" y="92.40" width="3.1" height="1.05" fill="#c9d1d9"/><rect x="10.2" y="92.40" width="3.1" height="1.05" fill="#a5d6ff"/><rect x="14.1" y="92.40" width="6.2" height="1.05" fill="#c9d1d9"/><rect x="21.0" y="92.40" width="3.1" height="1.05" fill="#ffa657"/><rect x="24.9" y="92.40" width="3.9" height="1.05" fill="#a5d6ff"/><rect x="1.0" y="95.46" width="9.2" height="1.05" fill="#8b949e"/><rect x="11.0" y="95.46" width="5.4" height="1.05" fill="#8b949e"/><rect x="4.1" y="96.99" width="2.3" height="1.05" fill="#c9d1d9"/><rect x="7.2" y="96.99" width="4.6" height="1.05" fill="#c9d1d9"/><rect x="7.2" y="98.52" width="6.2" height="1.05" fill="#c9d1d9"/><rect x="14.1" y="98.52" width="2.3" height="1.05" fill="#c9d1d9"/><rect x="17.2" y="98.52" width="9.2" height="1.05" fill="#a5d6ff"/><rect x="7.2" y="100.05" width="4.6" height="1.05" fill="#8b949e"/><rect x="12.5" y="100.05" width="6.2" height="1.05" fill="#c9d1d9"/><rect x="19.5" y="100.05" width="4.6" height="1.05" fill="#79c0ff"/><rect x="10.2" y="101.58" width="7.7" height="1.05" fill="#a5d6ff"/><rect x="18.7" y="101.58" width="7.7" height="1.05" fill="#c9d1d9"/><rect x="27.2" y="101.58" width="6.2" height="1.05" fill="#ffa657"/><rect x="34.1" y="101.58" width="3.1" height="1.05" fill="#a5d6ff"/><rect x="38.0" y="101.58" width="3.1" height="1.05" fill="#79c0ff"/><rect x="41.8" y="101.58" width="2.3" height="1.05" fill="#8b949e"/><rect x="44.9" y="101.58" width="4.6" height="1.05" fill="#ff7b72"/><rect x="50.3" y="101.58" width="3.9" height="1.05" fill="#79c0ff"/><rect x="54.9" y="101.58" width="1.5" height="1.05" fill="#79c0ff"/><rect x="57.2" y="101.58" width="3.1" height="1.05" fill="#a5d6ff"/><rect x="61.1" y="101.58" width="4.6" height="1.05" fill="#ff7b72"/><rect x="4.1" y="104.64" width="2.3" height="1.05" fill="#8b949e"/><rect x="7.2" y="104.64" width="6.2" height="1.05" fill="#8b949e"/><rect x="14.1" y="104.64" width="2.3" height="1.05" fill="#8b949e"/><rect x="17.2" y="104.64" width="1.5" height="1.05" fill="#8b949e"/><rect x="4.1" y="106.17" width="3.9" height="1.05" fill="#8b949e"/><rect x="8.7" y="106.17" width="6.2" height="1.05" fill="#8b949e"/><rect x="15.6" y="106.17" width="7.7" height="1.05" fill="#c9d1d9"/><rect x="24.1" y="106.17" width="3.1" height="1.05" fill="#c9d1d9"/><rect x="4.1" y="107.70" width="2.3" height="1.05" fill="#a5d6ff"/><rect x="7.2" y="107.70" width="1.5" height="1.05" fill="#ffa657"/><rect x="9.5" y="107.70" width="6.2" height="1.05" fill="#ff7b72"/><rect x="16.4" y="107.70" width="7.7" height="1.05" fill="#d2a8ff"/><rect x="24.9" y="107.70" width="9.2" height="1.05" fill="#79c0ff"/><rect x="34.9" y="107.70" width="1.5" height="1.05" fill="#79c0ff"/><rect x="37.2" y="107.70" width="0.8" height="1.05" fill="#ff7b72"/><rect x="4.1" y="109.23" width="3.9" height="1.05" fill="#79c0ff"/><rect x="8.7" y="109.23" width="7.7" height="1.05" fill="#79c0ff"/><rect x="17.2" y="109.23" width="6.2" height="1.05" fill="#c9d1d9"/><rect x="24.1" y="109.23" width="3.1" height="1.05" fill="#ffa657"/><rect x="1.0" y="110.76" width="2.3" height="1.05" fill="#c9d1d9"/><rect x="4.1" y="110.76" width="1.5" height="1.05" fill="#79c0ff"/><rect x="1.0" y="112.29" width="1.5" height="1.05" fill="#c9d1d9"/><rect x="3.3" y="112.29" width="2.3" height="1.05" fill="#c9d1d9"/><rect x="4.1" y="113.82" width="9.2" height="1.05" fill="#a5d6ff"/><rect x="14.1" y="113.82" width="3.9" height="1.05" fill="#8b949e"/><rect x="7.2" y="115.35" width="4.6" height="1.05" fill="#79c0ff"/><rect x="12.5" y="115.35" width="5.4" height="1.05" fill="#c9d1d9"/><rect x="4.1" y="116.88" width="2.3" height="1.05" fill="#8b949e"/><rect x="7.2" y="116.88" width="3.9" height="1.05" fill="#ffa657"/><rect x="11.8" y="116.88" width="1.5" height="1.05" fill="#c9d1d9"/><rect x="14.1" y="116.88" width="3.1" height="1.05" fill="#ffa657"/><rect x="17.9" y="116.88" width="4.6" height="1.05" fill="#ff7b72"/><rect x="23.3" y="116.88" width="0.8" height="1.05" fill="#ff7b72"/><rect x="4.1" y="118.41" width="7.7" height="1.05" fill="#a5d6ff"/><rect x="12.6" y="118.41" width="3.1" height="1.05" fill="#ffa657"/><rect x="16.4" y="118.41" width="3.1" height="1.05" fill="#c9d1d9"/><rect x="20.3" y="118.41" width="3.1" height="1.05" fill="#c9d1d9"/><rect x="24.1" y="118.41" width="3.1" height="1.05" fill="#a5d6ff"/><rect x="28.0" y="118.41" width="3.9" height="1.05" fill="#79c0ff"/><rect x="1.0" y="119.94" width="3.1" height="1.05" fill="#79c0ff"/><rect x="4.9" y="119.94" width="2.3" height="1.05" fill="#c9d1d9"/><rect x="7.9" y="119.94" width="4.6" height="1.05" fill="#a5d6ff"/><rect x="13.3" y="119.94" width="2.3" height="1.05" fill="#8b949e"/><rect x="16.4" y="119.94" width="9.2" height="1.05" fill="#d2a8ff"/><rect x="26.4" y="119.94" width="4.6" height="1.05" fill="#ff7b72"/><rect x="31.8" y="119.94" width="3.9" height="1.05" fill="#ffa657"/><rect x="36.4" y="119.94" width="3.9" height="1.05" fill="#d2a8ff"/><rect x="41.0" y="119.94" width="9.2" height="1.05" fill="#c9d1d9"/><rect x="51.1" y="119.94" width="1.5" height="1.05" fill="#79c0ff"/><rect x="53.4" y="119.94" width="7.7" height="1.05" fill="#79c0ff"/><rect x="61.8" y="119.94" width="0.8" height="1.05" fill="#79c0ff"/><rect x="1.0" y="121.47" width="2.3" height="1.05" fill="#79c0ff"/><rect x="4.1" y="121.47" width="4.6" height="1.05" fill="#8b949e"/><rect x="9.5" y="121.47" width="2.3" height="1.05" fill="#c9d1d9"/><rect x="12.6" y="121.47" width="2.3" height="1.05" fill="#79c0ff"/><rect x="15.6" y="121.47" width="2.3" height="1.05" fill="#ffa657"/><rect x="18.7" y="121.47" width="2.3" height="1.05" fill="#d2a8ff"/><rect x="1.0" y="123.00" width="9.2" height="1.05" fill="#8b949e"/><rect x="11.0" y="123.00" width="3.9" height="1.05" fill="#8b949e"/><rect x="15.6" y="123.00" width="4.6" height="1.05" fill="#8b949e"/><rect x="21.0" y="123.00" width="2.3" height="1.05" fill="#8b949e"/><rect x="24.1" y="123.00" width="9.2" height="1.05" fill="#8b949e"/><rect x="34.1" y="123.00" width="1.5" height="1.05" fill="#8b949e"/><rect x="36.4" y="123.00" width="3.9" height="1.05" fill="#8b949e"/><rect x="41.0" y="123.00" width="3.1" height="1.05" fill="#8b949e"/><rect x="44.9" y="123.00" width="4.6" height="1.05" fill="#8b949e"/><rect x="50.3" y="123.00" width="7.7" height="1.05" fill="#8b949e"/><rect x="58.8" y="123.00" width="4.6" height="1.05" fill="#8b949e"/><rect x="64.1" y="123.00" width="2.3" height="1.05" fill="#8b949e"/><rect x="1.0" y="124.53" width="3.9" height="1.05" fill="#ffa657"/><rect x="5.6" y="124.53" width="2.3" height="1.05" fill="#c9d1d9"/><rect x="4.1" y="126.06" width="6.2" height="1.05" fill="#8b949e"/><rect x="11.0" y="126.06" width="7.7" height="1.05" fill="#d2a8ff"/><rect x="19.5" y="126.06" width="2.3" height="1.05" fill="#79c0ff"/><rect x="22.6" y="126.06" width="2.3" height="1.05" fill="#79c0ff"/><rect x="25.6" y="126.06" width="3.1" height="1.05" fill="#79c0ff"/><rect x="29.5" y="126.06" width="2.3" height="1.05" fill="#ffa657"/><rect x="1.0" y="129.12" width="2.3" height="1.05" fill="#8b949e"/><rect x="4.1" y="129.12" width="7.7" height="1.05" fill="#8b949e"/><rect x="12.6" y="129.12" width="7.7" height="1.05" fill="#8b949e"/><rect x="21.0" y="129.12" width="2.3" height="1.05" fill="#8b949e"/><rect x="24.1" y="129.12" width="6.2" height="1.05" fill="#8b949e"/><rect x="31.0" y="129.12" width="7.7" height="1.05" fill="#8b949e"/><rect x="39.5" y="129.12" width="3.1" height="1.05" fill="#8b949e"/><rect x="43.4" y="129.12" width="3.9" height="1.05" fill="#8b949e"/><rect x="48.0" y="129.12" width="3.1" height="1.05" fill="#8b949e"/><rect x="51.8" y="129.12" width="7.7" height="1.05" fill="#8b949e"/><rect x="60.3" y="129.12" width="2.3" height="1.05" fill="#8b949e"/><rect x="4.1" y="130.65" width="4.6" height="1.05" fill="#c9d1d9"/><rect x="4.1" y="132.18" width="3.9" height="1.05" fill="#c9d1d9"/><rect x="7.2" y="133.71" width="6.2" height="1.05" fill="#c9d1d9"/><rect x="14.1" y="133.71" width="2.3" height="1.05" fill="#a5d6ff"/><rect x="17.2" y="133.71" width="3.1" height="1.05" fill="#c9d1d9"/><rect x="21.0" y="133.71" width="4.6" height="1.05" fill="#79c0ff"/><rect x="26.4" y="133.71" width="3.9" height="1.05" fill="#c9d1d9"/><rect x="31.0" y="133.71" width="3.1" height="1.05" fill="#a5d6ff"/><rect x="34.9" y="133.71" width="3.9" height="1.05" fill="#79c0ff"/><rect x="39.5" y="133.71" width="1.5" height="1.05" fill="#a5d6ff"/><rect x="7.2" y="135.24" width="3.1" height="1.05" fill="#c9d1d9"/><rect x="11.0" y="135.24" width="9.2" height="1.05" fill="#a5d6ff"/><rect x="4.1" y="136.77" width="2.3" height="1.05" fill="#8b949e"/><rect x="7.2" y="136.77" width="3.1" height="1.05" fill="#c9d1d9"/><rect x="11.0" y="136.77" width="2.3" height="1.05" fill="#79c0ff"/><rect x="14.1" y="136.77" width="4.6" height="1.05" fill="#79c0ff"/><rect x="19.5" y="136.77" width="4.6" height="1.05" fill="#a5d6ff"/><rect x="7.2" y="138.30" width="4.6" height="1.05" fill="#c9d1d9"/><rect x="7.2" y="139.83" width="2.3" height="1.05" fill="#8b949e"/><rect x="10.2" y="139.83" width="1.5" height="1.05" fill="#ffa657"/><rect x="12.5" y="139.83" width="3.1" height="1.05" fill="#79c0ff"/><rect x="16.4" y="139.83" width="1.5" height="1.05" fill="#ffa657"/><rect x="7.2" y="141.36" width="4.6" height="1.05" fill="#8b949e"/><rect x="4.1" y="144.42" width="3.1" height="1.05" fill="#c9d1d9"/><rect x="7.9" y="144.42" width="3.9" height="1.05" fill="#a5d6ff"/><rect x="12.6" y="144.42" width="2.3" height="1.05" fill="#ff7b72"/><rect x="4.1" y="145.95" width="9.2" height="1.05" fill="#8b949e"/><rect x="14.1" y="145.95" width="2.3" height="1.05" fill="#8b949e"/><rect x="17.2" y="145.95" width="9.2" height="1.05" fill="#8b949e"/><rect x="27.2" y="145.95" width="6.2" height="1.05" fill="#8b949e"/><rect x="34.1" y="145.95" width="0.8" height="1.05" fill="#8b949e"/><rect x="4.1" y="147.48" width="9.2" height="1.05" fill="#8b949e"/><rect x="14.1" y="147.48" width="7.7" height="1.05" fill="#ffa657"/><rect x="22.6" y="147.48" width="2.3" height="1.05" fill="#a5d6ff"/><rect x="25.6" y="147.48" width="1.5" height="1.05" fill="#79c0ff"/><rect x="7.2" y="149.01" width="6.2" height="1.05" fill="#ff7b72"/><rect x="14.1" y="149.01" width="4.6" height="1.05" fill="#a5d6ff"/><rect x="19.5" y="149.01" width="7.7" height="1.05" fill="#ffa657"/><rect x="27.9" y="149.01" width="2.3" height="1.05" fill="#c9d1d9"/><rect x="7.2" y="150.54" width="9.2" height="1.05" fill="#c9d1d9"/><rect x="17.2" y="150.54" width="3.9" height="1.05" fill="#ff7b72"/><rect x="4.1" y="152.07" width="7.7" height="1.05" fill="#c9d1d9"/><rect x="12.6" y="152.07" width="2.3" height="1.05" fill="#c9d1d9"/><rect x="15.6" y="152.07" width="2.3" height="1.05" fill="#a5d6ff"/><rect x="4.1" y="153.60" width="2.3" height="1.05" fill="#d2a8ff"/><rect x="7.2" y="153.60" width="3.1" height="1.05" fill="#d2a8ff"/><rect x="11.0" y="153.60" width="9.2" height="1.05" fill="#ff7b72"/><rect x="21.0" y="153.60" width="4.6" height="1.05" fill="#c9d1d9"/><rect x="26.4" y="153.60" width="0.8" height="1.05" fill="#ff7b72"/><rect x="7.2" y="155.13" width="7.7" height="1.05" fill="#8b949e"/><rect x="15.6" y="155.13" width="3.1" height="1.05" fill="#8b949e"/><rect x="19.5" y="155.13" width="6.2" height="1.05" fill="#8b949e"/><rect x="26.4" y="155.13" width="3.9" height="1.05" fill="#8b949e"/><rect x="31.0" y="155.13" width="1.5" height="1.05" fill="#8b949e"/><rect x="33.3" y="155.13" width="4.6" height="1.05" fill="#8b949e"/><rect x="38.7" y="155.13" width="1.5" height="1.05" fill="#8b949e"/><rect x="41.0" y="155.13" width="9.2" height="1.05" fill="#8b949e"/><rect x="51.0" y="155.13" width="6.2" height="1.05" fill="#8b949e"/><rect x="58.0" y="155.13" width="4.6" height="1.05" fill="#8b949e"/><rect x="4.1" y="156.66" width="1.5" height="1.05" fill="#c9d1d9"/><rect x="6.4" y="156.66" width="6.2" height="1.05" fill="#c9d1d9"/><rect x="13.3" y="156.66" width="4.6" height="1.05" fill="#ff7b72"/><rect x="7.2" y="158.19" width="3.9" height="1.05" fill="#c9d1d9"/><rect x="11.8" y="158.19" width="1.5" height="1.05" fill="#d2a8ff"/><rect x="14.1" y="158.19" width="4.6" height="1.05" fill="#c9d1d9"/><rect x="19.5" y="158.19" width="4.6" height="1.05" fill="#ffa657"/><rect x="24.9" y="158.19" width="3.1" height="1.05" fill="#c9d1d9"/><rect x="28.7" y="158.19" width="9.2" height="1.05" fill="#ffa657"/><rect x="38.7" y="158.19" width="2.3" height="1.05" fill="#79c0ff"/><rect x="10.2" y="159.72" width="3.9" height="1.05" fill="#79c0ff"/><rect x="14.9" y="159.72" width="4.6" height="1.05" fill="#c9d1d9"/><rect x="20.2" y="159.72" width="3.9" height="1.05" fill="#79c0ff"/><rect x="10.2" y="161.25" width="3.1" height="1.05" fill="#c9d1d9"/><rect x="14.1" y="161.25" width="4.6" height="1.05" fill="#79c0ff"/><rect x="19.5" y="161.25" width="2.3" height="1.05" fill="#8b949e"/><rect x="22.6" y="161.25" width="1.5" height="1.05" fill="#8b949e"/><rect x="10.2" y="162.78" width="4.6" height="1.05" fill="#8b949e"/><rect x="15.6" y="162.78" width="4.6" height="1.05" fill="#8b949e"/><rect x="21.0" y="162.78" width="7.7" height="1.05" fill="#8b949e"/><rect x="29.5" y="162.78" width="2.3" height="1.05" fill="#8b949e"/><rect x="32.6" y="162.78" width="3.1" height="1.05" fill="#8b949e"/><rect x="36.4" y="162.78" width="4.6" height="1.05" fill="#8b949e"/><rect x="41.8" y="162.78" width="3.9" height="1.05" fill="#8b949e"/><rect x="46.4" y="162.78" width="3.9" height="1.05" fill="#8b949e"/><rect x="51.1" y="162.78" width="3.1" height="1.05" fill="#8b949e"/><rect x="54.9" y="162.78" width="4.6" height="1.05" fill="#8b949e"/><rect x="60.3" y="162.78" width="1.5" height="1.05" fill="#8b949e"/><rect x="62.6" y="162.78" width="3.1" height="1.05" fill="#8b949e"/><rect x="10.2" y="164.31" width="7.7" height="1.05" fill="#8b949e"/><rect x="18.7" y="164.31" width="1.5" height="1.05" fill="#8b949e"/><rect x="21.0" y="164.31" width="9.2" height="1.05" fill="#8b949e"/><rect x="31.0" y="164.31" width="1.5" height="1.05" fill="#8b949e"/><rect x="33.3" y="164.31" width="3.1" height="1.05" fill="#8b949e"/><rect x="37.2" y="164.31" width="2.3" height="1.05" fill="#8b949e"/><rect x="40.3" y="164.31" width="6.2" height="1.05" fill="#8b949e"/><rect x="47.2" y="164.31" width="6.2" height="1.05" fill="#8b949e"/><rect x="54.1" y="164.31" width="9.2" height="1.05" fill="#8b949e"/><rect x="64.1" y="164.31" width="1.5" height="1.05" fill="#8b949e"/><rect x="4.1" y="165.84" width="3.1" height="1.05" fill="#a5d6ff"/><rect x="7.9" y="165.84" width="3.1" height="1.05" fill="#d2a8ff"/><rect x="11.8" y="165.84" width="7.7" height="1.05" fill="#c9d1d9"/><rect x="20.3" y="165.84" width="9.2" height="1.05" fill="#79c0ff"/><rect x="30.3" y="165.84" width="4.6" height="1.05" fill="#c9d1d9"/><rect x="35.7" y="165.84" width="2.3" height="1.05" fill="#8b949e"/><rect x="1.0" y="167.37" width="1.5" height="1.05" fill="#a5d6ff"/><rect x="3.3" y="167.37" width="9.2" height="1.05" fill="#79c0ff"/><rect x="13.3" y="167.37" width="6.2" height="1.05" fill="#79c0ff"/><rect x="20.2" y="167.37" width="1.5" height="1.05" fill="#a5d6ff"/><rect x="22.6" y="167.37" width="9.2" height="1.05" fill="#ffa657"/><rect x="32.6" y="167.37" width="9.2" height="1.05" fill="#c9d1d9"/><rect x="42.6" y="167.37" width="1.5" height="1.05" fill="#d2a8ff"/><rect x="44.9" y="167.37" width="2.3" height="1.05" fill="#79c0ff"/><rect x="48.0" y="167.37" width="3.9" height="1.05" fill="#a5d6ff"/><rect x="52.6" y="167.37" width="3.1" height="1.05" fill="#ff7b72"/><rect x="56.4" y="167.37" width="4.6" height="1.05" fill="#ffa657"/><rect x="61.8" y="167.37" width="0.8" height="1.05" fill="#c9d1d9"/><rect x="1.0" y="168.90" width="9.2" height="1.05" fill="#d2a8ff"/><rect x="11.0" y="168.90" width="3.1" height="1.05" fill="#ffa657"/><rect x="14.9" y="168.90" width="3.1" height="1.05" fill="#c9d1d9"/><rect x="4.1" y="170.43" width="7.7" height="1.05" fill="#8b949e"/><rect x="12.6" y="170.43" width="6.2" height="1.05" fill="#c9d1d9"/><rect x="19.5" y="170.43" width="1.5" height="1.05" fill="#79c0ff"/><rect x="21.8" y="170.43" width="9.2" height="1.05" fill="#a5d6ff"/><rect x="4.1" y="171.96" width="1.5" height="1.05" fill="#ff7b72"/><rect x="6.4" y="171.96" width="3.9" height="1.05" fill="#ffa657"/><rect x="11.0" y="171.96" width="3.1" height="1.05" fill="#d2a8ff"/><rect x="14.9" y="171.96" width="7.7" height="1.05" fill="#79c0ff"/><rect x="23.3" y="171.96" width="4.6" height="1.05" fill="#8b949e"/><rect x="28.7" y="171.96" width="3.1" height="1.05" fill="#d2a8ff"/><rect x="4.1" y="173.49" width="2.3" height="1.05" fill="#79c0ff"/><rect x="7.2" y="173.49" width="3.9" height="1.05" fill="#ffa657"/><rect x="11.8" y="173.49" width="6.2" height="1.05" fill="#d2a8ff"/><rect x="4.1" y="175.02" width="3.9" height="1.05" fill="#ff7b72"/><rect x="8.7" y="175.02" width="3.1" height="1.05" fill="#ffa657"/><rect x="12.6" y="175.02" width="1.5" height="1.05" fill="#c9d1d9"/><rect x="14.9" y="175.02" width="3.1" height="1.05" fill="#8b949e"/><rect x="18.7" y="175.02" width="5.4" height="1.05" fill="#c9d1d9"/><rect x="1.0" y="176.55" width="3.1" height="1.05" fill="#8b949e"/><rect x="4.9" y="176.55" width="3.9" height="1.05" fill="#ffa657"/><rect x="9.5" y="176.55" width="3.9" height="1.05" fill="#a5d6ff"/><rect x="14.1" y="176.55" width="6.9" height="1.05" fill="#c9d1d9"/><rect x="1.0" y="178.08" width="3.9" height="1.05" fill="#79c0ff"/><rect x="5.6" y="178.08" width="6.2" height="1.05" fill="#ffa657"/><rect x="1.0" y="181.14" width="3.1" height="1.05" fill="#c9d1d9"/><rect x="4.9" y="181.14" width="7.7" height="1.05" fill="#a5d6ff"/><rect x="13.3" y="181.14" width="3.9" height="1.05" fill="#c9d1d9"/><rect x="4.1" y="182.67" width="3.9" height="1.05" fill="#8b949e"/><rect x="8.7" y="182.67" width="2.3" height="1.05" fill="#8b949e"/><rect x="11.8" y="182.67" width="1.5" height="1.05" fill="#8b949e"/><rect x="14.1" y="182.67" width="6.2" height="1.05" fill="#8b949e"/><rect x="21.0" y="182.67" width="7.7" height="1.05" fill="#8b949e"/><rect x="29.5" y="182.67" width="9.2" height="1.05" fill="#8b949e"/><rect x="39.5" y="182.67" width="2.3" height="1.05" fill="#8b949e"/><rect x="42.6" y="182.67" width="7.7" height="1.05" fill="#8b949e"/><rect x="51.1" y="182.67" width="6.2" height="1.05" fill="#8b949e"/><rect x="7.2" y="184.20" width="3.9" height="1.05" fill="#8b949e"/><rect x="10.2" y="187.26" width="4.6" height="1.05" fill="#ffa657"/><rect x="4.1" y="188.79" width="9.2" height="1.05" fill="#ffa657"/><rect x="14.1" y="188.79" width="3.1" height="1.05" fill="#c9d1d9"/><rect x="17.9" y="188.79" width="4.6" height="1.05" fill="#79c0ff"/><rect x="23.3" y="188.79" width="9.2" height="1.05" fill="#ffa657"/><rect x="33.3" y="188.79" width="3.1" height="1.05" fill="#ffa657"/><rect x="37.2" y="188.79" width="0.8" height="1.05" fill="#c9d1d9"/><rect x="7.2" y="190.32" width="1.5" height="1.05" fill="#8b949e"/><rect x="9.5" y="190.32" width="1.5" height="1.05" fill="#c9d1d9"/><rect x="11.8" y="190.32" width="2.3" height="1.05" fill="#c9d1d9"/><rect x="14.9" y="190.32" width="6.2" height="1.05" fill="#d2a8ff"/><rect x="7.2" y="191.85" width="4.6" height="1.05" fill="#d2a8ff"/><rect x="12.5" y="191.85" width="7.7" height="1.05" fill="#d2a8ff"/><rect x="4.1" y="193.38" width="4.6" height="1.05" fill="#c9d1d9"/><rect x="9.5" y="193.38" width="3.1" height="1.05" fill="#ffa657"/><rect x="13.3" y="193.38" width="3.9" height="1.05" fill="#8b949e"/><rect x="17.9" y="193.38" width="3.1" height="1.05" fill="#c9d1d9"/><rect x="21.8" y="193.38" width="2.3" height="1.05" fill="#79c0ff"/><rect x="1.0" y="196.44" width="4.6" height="1.05" fill="#ff7b72"/><rect x="6.4" y="196.44" width="7.7" height="1.05" fill="#d2a8ff"/><rect x="14.9" y="196.44" width="6.2" height="1.05" fill="#d2a8ff"/><rect x="21.8" y="196.44" width="6.9" height="1.05" fill="#c9d1d9"/><rect x="1.0" y="199.50" width="2.3" height="1.05" fill="#ff7b72"/><rect x="4.1" y="199.50" width="1.5" height="1.05" fill="#c9d1d9"/><rect x="6.4" y="199.50" width="6.2" height="1.05" fill="#c9d1d9"/><rect x="13.3" y="199.50" width="4.6" height="1.05" fill="#c9d1d9"/><rect x="18.7" y="199.50" width="2.3" height="1.05" fill="#8b949e"/><rect x="1.0" y="201.03" width="3.9" height="1.05" fill="#d2a8ff"/><rect x="5.6" y="201.03" width="1.5" height="1.05" fill="#a5d6ff"/><rect x="7.9" y="201.03" width="7.7" height="1.05" fill="#a5d6ff"/><rect x="16.4" y="201.03" width="7.7" height="1.05" fill="#d2a8ff"/><rect x="24.9" y="201.03" width="4.6" height="1.05" fill="#d2a8ff"/><rect x="30.3" y="201.03" width="9.2" height="1.05" fill="#8b949e"/><rect x="40.3" y="201.03" width="7.7" height="1.05" fill="#ffa657"/><rect x="48.7" y="201.03" width="1.5" height="1.05" fill="#79c0ff"/><rect x="51.0" y="201.03" width="4.6" height="1.05" fill="#c9d1d9"/><rect x="56.4" y="201.03" width="6.2" height="1.05" fill="#c9d1d9"/><rect x="1.0" y="202.56" width="4.6" height="1.05" fill="#c9d1d9"/><rect x="6.4" y="202.56" width="3.9" height="1.05" fill="#79c0ff"/><rect x="11.0" y="202.56" width="1.5" height="1.05" fill="#79c0ff"/><rect x="13.3" y="202.56" width="1.5" height="1.05" fill="#ff7b72"/><rect x="4.1" y="204.09" width="6.2" height="1.05" fill="#c9d1d9"/><rect x="11.0" y="204.09" width="6.2" height="1.05" fill="#d2a8ff"/><rect x="17.9" y="204.09" width="1.5" height="1.05" fill="#c9d1d9"/><rect x="20.2" y="204.09" width="3.9" height="1.05" fill="#ffa657"/><rect x="24.9" y="204.09" width="3.1" height="1.05" fill="#c9d1d9"/><rect x="28.7" y="204.09" width="3.1" height="1.05" fill="#79c0ff"/><rect x="32.6" y="204.09" width="5.4" height="1.05" fill="#a5d6ff"/><rect x="4.1" y="205.62" width="4.6" height="1.05" fill="#c9d1d9"/><rect x="9.5" y="205.62" width="9.2" height="1.05" fill="#c9d1d9"/><rect x="19.5" y="205.62" width="1.5" height="1.05" fill="#c9d1d9"/><rect x="7.2" y="207.15" width="2.3" height="1.05" fill="#d2a8ff"/><rect x="10.2" y="207.15" width="2.3" height="1.05" fill="#c9d1d9"/><rect x="13.3" y="207.15" width="2.3" height="1.05" fill="#8b949e"/><rect x="16.4" y="207.15" width="9.2" height="1.05" fill="#ff7b72"/><rect x="26.4" y="207.15" width="3.1" height="1.05" fill="#a5d6ff"/><rect x="30.3" y="207.15" width="7.7" height="1.05" fill="#8b949e"/><rect x="38.7" y="207.15" width="1.5" height="1.05" fill="#c9d1d9"/><rect x="10.2" y="208.68" width="4.6" height="1.05" fill="#c9d1d9"/><rect x="15.6" y="208.68" width="6.2" height="1.05" fill="#79c0ff"/><rect x="22.6" y="208.68" width="6.2" height="1.05" fill="#c9d1d9"/><rect x="29.5" y="208.68" width="3.1" height="1.05" fill="#a5d6ff"/><rect x="10.2" y="210.21" width="4.6" height="1.05" fill="#79c0ff"/><rect x="15.6" y="210.21" width="3.1" height="1.05" fill="#c9d1d9"/><rect x="19.5" y="210.21" width="1.5" height="1.05" fill="#a5d6ff"/><rect x="10.2" y="211.74" width="9.2" height="1.05" fill="#a5d6ff"/><rect x="20.2" y="211.74" width="0.8" height="1.05" fill="#c9d1d9"/><rect x="10.2" y="213.27" width="3.1" height="1.05" fill="#ff7b72"/><rect x="14.1" y="213.27" width="3.1" height="1.05" fill="#d2a8ff"/><rect x="17.9" y="213.27" width="1.5" height="1.05" fill="#c9d1d9"/><rect x="20.2" y="213.27" width="4.6" height="1.05" fill="#c9d1d9"/><rect x="25.6" y="213.27" width="2.3" height="1.05" fill="#ffa657"/><rect x="28.7" y="213.27" width="4.6" height="1.05" fill="#ff7b72"/><rect x="10.2" y="214.80" width="4.6" height="1.05" fill="#8b949e"/><rect x="15.6" y="214.80" width="4.6" height="1.05" fill="#c9d1d9"/><rect x="4.1" y="216.33" width="7.7" height="1.05" fill="#c9d1d9"/><rect x="12.6" y="216.33" width="2.3" height="1.05" fill="#79c0ff"/><rect x="1.0" y="217.86" width="7.7" height="1.05" fill="#d2a8ff"/><rect x="9.5" y="217.86" width="3.1" height="1.05" fill="#c9d1d9"/><rect x="13.3" y="217.86" width="1.5" height="1.05" fill="#c9d1d9"/><rect x="15.6" y="217.86" width="2.3" height="1.05" fill="#c9d1d9"/><rect x="1.0" y="219.39" width="3.9" height="1.05" fill="#c9d1d9"/><rect x="5.6" y="219.39" width="4.6" height="1.05" fill="#79c0ff"/><rect x="11.0" y="219.39" width="1.5" height="1.05" fill="#79c0ff"/><rect x="13.3" y="219.39" width="1.5" height="1.05" fill="#ff7b72"/><rect x="1.0" y="220.92" width="6.2" height="1.05" fill="#8b949e"/><rect x="7.9" y="220.92" width="3.1" height="1.05" fill="#c9d1d9"/><rect x="11.8" y="220.92" width="7.7" height="1.05" fill="#8b949e"/><rect x="20.2" y="220.92" width="1.5" height="1.05" fill="#ffa657"/><rect x="22.6" y="220.92" width="6.2" height="1.05" fill="#79c0ff"/><rect x="29.5" y="220.92" width="7.7" height="1.05" fill="#79c0ff"/><rect x="38.0" y="220.92" width="1.5" height="1.05" fill="#c9d1d9"/><rect x="40.3" y="220.92" width="4.6" height="1.05" fill="#c9d1d9"/><rect x="45.7" y="220.92" width="3.9" height="1.05" fill="#c9d1d9"/><rect x="50.3" y="220.92" width="3.9" height="1.05" fill="#8b949e"/><rect x="54.9" y="220.92" width="1.5" height="1.05" fill="#79c0ff"/><rect x="57.2" y="220.92" width="1.5" height="1.05" fill="#79c0ff"/><rect x="59.5" y="220.92" width="2.3" height="1.05" fill="#d2a8ff"/><rect x="4.1" y="222.45" width="9.2" height="1.05" fill="#8b949e"/><rect x="14.1" y="222.45" width="1.5" height="1.05" fill="#8b949e"/><rect x="16.4" y="222.45" width="3.9" height="1.05" fill="#8b949e"/><rect x="21.0" y="222.45" width="2.3" height="1.05" fill="#8b949e"/><rect x="24.1" y="222.45" width="6.2" height="1.05" fill="#8b949e"/><rect x="31.0" y="222.45" width="1.5" height="1.05" fill="#8b949e"/><rect x="33.3" y="222.45" width="4.6" height="1.05" fill="#8b949e"/><rect x="38.7" y="222.45" width="3.9" height="1.05" fill="#8b949e"/><rect x="43.3" y="222.45" width="9.2" height="1.05" fill="#8b949e"/><rect x="53.4" y="222.45" width="4.6" height="1.05" fill="#8b949e"/><rect x="7.2" y="223.98" width="7.7" height="1.05" fill="#ffa657"/><rect x="7.2" y="225.51" width="3.1" height="1.05" fill="#c9d1d9"/><rect x="11.0" y="225.51" width="6.2" height="1.05" fill="#ffa657"/><rect x="17.9" y="225.51" width="6.2" height="1.05" fill="#79c0ff"/><rect x="24.9" y="225.51" width="4.6" height="1.05" fill="#c9d1d9"/><rect x="30.3" y="225.51" width="9.2" height="1.05" fill="#c9d1d9"/><rect x="40.3" y="225.51" width="4.6" height="1.05" fill="#c9d1d9"/><rect x="45.7" y="225.51" width="2.3" height="1.05" fill="#c9d1d9"/><rect x="48.7" y="225.51" width="2.3" height="1.05" fill="#c9d1d9"/><rect x="51.8" y="225.51" width="6.2" height="1.05" fill="#c9d1d9"/><rect x="58.7" y="225.51" width="3.1" height="1.05" fill="#c9d1d9"/><rect x="62.6" y="225.51" width="1.5" height="1.05" fill="#79c0ff"/><rect x="7.2" y="227.04" width="6.2" height="1.05" fill="#c9d1d9"/><rect x="14.1" y="227.04" width="0.8" height="1.05" fill="#ffa657"/><rect x="4.1" y="230.10" width="3.9" height="1.05" fill="#ff7b72"/><rect x="8.7" y="230.10" width="3.1" height="1.05" fill="#c9d1d9"/><rect x="12.6" y="230.10" width="2.3" height="1.05" fill="#a5d6ff"/><rect x="15.6" y="230.10" width="2.3" height="1.05" fill="#a5d6ff"/><rect x="18.7" y="230.10" width="5.4" height="1.05" fill="#ffa657"/><rect x="1.0" y="231.63" width="2.3" height="1.05" fill="#ffa657"/><rect x="4.1" y="231.63" width="6.2" height="1.05" fill="#79c0ff"/><rect x="11.0" y="231.63" width="0.8" height="1.05" fill="#79c0ff"/><rect x="1.0" y="233.16" width="1.5" height="1.05" fill="#c9d1d9"/><rect x="3.3" y="233.16" width="6.2" height="1.05" fill="#8b949e"/><rect x="10.2" y="233.16" width="7.7" height="1.05" fill="#79c0ff"/><rect x="18.7" y="233.16" width="2.3" height="1.05" fill="#d2a8ff"/><rect x="21.8" y="233.16" width="2.3" height="1.05" fill="#ffa657"/><rect x="1.0" y="234.69" width="7.7" height="1.05" fill="#a5d6ff"/><rect x="9.5" y="234.69" width="1.5" height="1.05" fill="#79c0ff"/><rect x="11.8" y="234.69" width="1.5" height="1.05" fill="#79c0ff"/><rect x="14.1" y="234.69" width="9.2" height="1.05" fill="#8b949e"/><rect x="4.1" y="236.22" width="3.1" height="1.05" fill="#8b949e"/><rect x="7.9" y="236.22" width="9.2" height="1.05" fill="#8b949e"/><rect x="17.9" y="236.22" width="1.5" height="1.05" fill="#8b949e"/><rect x="4.1" y="237.75" width="9.2" height="1.05" fill="#79c0ff"/><rect x="14.1" y="237.75" width="7.7" height="1.05" fill="#ff7b72"/><rect x="22.6" y="237.75" width="1.5" height="1.05" fill="#8b949e"/><rect x="7.2" y="239.28" width="2.3" height="1.05" fill="#79c0ff"/><rect x="10.2" y="239.28" width="4.6" height="1.05" fill="#c9d1d9"/><rect x="15.6" y="239.28" width="2.3" height="1.05" fill="#79c0ff"/><rect x="7.2" y="240.81" width="6.2" height="1.05" fill="#8b949e"/><rect x="14.1" y="240.81" width="3.9" height="1.05" fill="#79c0ff"/><rect x="18.7" y="240.81" width="1.5" height="1.05" fill="#ffa657"/><rect x="21.0" y="240.81" width="3.1" height="1.05" fill="#8b949e"/><rect x="10.2" y="242.34" width="7.7" height="1.05" fill="#8b949e"/><rect x="10.2" y="243.87" width="2.3" height="1.05" fill="#8b949e"/><rect x="13.3" y="243.87" width="3.1" height="1.05" fill="#8b949e"/><rect x="17.2" y="243.87" width="6.2" height="1.05" fill="#8b949e"/><rect x="24.1" y="243.87" width="3.1" height="1.05" fill="#8b949e"/><rect x="28.0" y="243.87" width="2.3" height="1.05" fill="#8b949e"/><rect x="31.0" y="243.87" width="6.2" height="1.05" fill="#8b949e"/><rect x="38.0" y="243.87" width="1.5" height="1.05" fill="#8b949e"/><rect x="40.3" y="243.87" width="6.2" height="1.05" fill="#8b949e"/><rect x="47.2" y="243.87" width="3.9" height="1.05" fill="#8b949e"/><rect x="51.8" y="243.87" width="4.6" height="1.05" fill="#8b949e"/><rect x="57.2" y="243.87" width="2.3" height="1.05" fill="#8b949e"/><rect x="13.3" y="245.40" width="2.3" height="1.05" fill="#d2a8ff"/><rect x="16.4" y="245.40" width="3.9" height="1.05" fill="#79c0ff"/><rect x="21.0" y="245.40" width="6.2" height="1.05" fill="#c9d1d9"/><rect x="28.0" y="245.40" width="7.7" height="1.05" fill="#ffa657"/><rect x="36.4" y="245.40" width="1.5" height="1.05" fill="#c9d1d9"/><rect x="38.7" y="245.40" width="2.3" height="1.05" fill="#c9d1d9"/><rect x="13.3" y="246.93" width="3.1" height="1.05" fill="#79c0ff"/><rect x="17.2" y="246.93" width="9.2" height="1.05" fill="#ff7b72"/><rect x="16.4" y="248.46" width="6.2" height="1.05" fill="#c9d1d9"/><rect x="23.3" y="248.46" width="3.9" height="1.05" fill="#ff7b72"/><rect x="27.9" y="248.46" width="2.3" height="1.05" fill="#c9d1d9"/><rect x="31.0" y="248.46" width="5.4" height="1.05" fill="#c9d1d9"/><rect x="16.4" y="249.99" width="7.7" height="1.05" fill="#c9d1d9"/><rect x="16.4" y="251.52" width="2.3" height="1.05" fill="#d2a8ff"/><rect x="19.5" y="251.52" width="6.2" height="1.05" fill="#79c0ff"/><rect x="26.4" y="251.52" width="7.7" height="1.05" fill="#c9d1d9"/><rect x="34.9" y="251.52" width="9.2" height="1.05" fill="#a5d6ff"/><rect x="19.5" y="253.05" width="2.3" height="1.05" fill="#8b949e"/><rect x="22.6" y="253.05" width="3.9" height="1.05" fill="#8b949e"/><rect x="27.2" y="253.05" width="7.7" height="1.05" fill="#c9d1d9"/><rect x="35.7" y="253.05" width="0.8" height="1.05" fill="#a5d6ff"/><rect x="22.6" y="254.58" width="4.6" height="1.05" fill="#a5d6ff"/><rect x="27.9" y="254.58" width="9.2" height="1.05" fill="#c9d1d9"/><rect x="38.0" y="254.58" width="4.6" height="1.05" fill="#ff7b72"/><rect x="22.6" y="256.11" width="4.6" height="1.05" fill="#ffa657"/><rect x="27.9" y="256.11" width="7.7" height="1.05" fill="#c9d1d9"/><rect x="36.4" y="256.11" width="6.2" height="1.05" fill="#d2a8ff"/><rect x="43.3" y="256.11" width="2.3" height="1.05" fill="#79c0ff"/><rect x="22.6" y="257.64" width="6.2" height="1.05" fill="#ff7b72"/><rect x="29.5" y="257.64" width="6.2" height="1.05" fill="#ff7b72"/><rect x="22.6" y="259.17" width="1.5" height="1.05" fill="#79c0ff"/><rect x="24.9" y="259.17" width="9.2" height="1.05" fill="#d2a8ff"/><rect x="34.9" y="259.17" width="6.2" height="1.05" fill="#79c0ff"/><rect x="41.8" y="259.17" width="0.8" height="1.05" fill="#79c0ff"/><rect x="25.6" y="260.70" width="1.5" height="1.05" fill="#ffa657"/><rect x="27.9" y="260.70" width="2.3" height="1.05" fill="#c9d1d9"/><rect x="25.6" y="262.23" width="4.6" height="1.05" fill="#ffa657"/><rect x="25.6" y="263.76" width="3.9" height="1.05" fill="#8b949e"/><rect x="30.3" y="263.76" width="6.2" height="1.05" fill="#79c0ff"/><rect x="37.2" y="263.76" width="7.7" height="1.05" fill="#d2a8ff"/><rect x="45.7" y="263.76" width="2.3" height="1.05" fill="#ff7b72"/><rect x="48.7" y="263.76" width="3.1" height="1.05" fill="#a5d6ff"/><rect x="52.6" y="263.76" width="4.6" height="1.05" fill="#8b949e"/><rect x="58.0" y="263.76" width="1.5" height="1.05" fill="#ffa657"/><rect x="22.6" y="265.29" width="1.5" height="1.05" fill="#d2a8ff"/><rect x="24.9" y="265.29" width="6.2" height="1.05" fill="#ffa657"/><rect x="31.8" y="265.29" width="2.3" height="1.05" fill="#d2a8ff"/><rect x="34.9" y="265.29" width="4.6" height="1.05" fill="#79c0ff"/><rect x="40.3" y="265.29" width="2.3" height="1.05" fill="#d2a8ff"/><rect x="22.6" y="266.82" width="4.6" height="1.05" fill="#c9d1d9"/><rect x="27.9" y="266.82" width="2.3" height="1.05" fill="#c9d1d9"/><rect x="25.6" y="268.35" width="4.6" height="1.05" fill="#79c0ff"/><rect x="22.6" y="269.88" width="3.1" height="1.05" fill="#79c0ff"/><rect x="26.4" y="269.88" width="3.1" height="1.05" fill="#ffa657"/><rect x="22.6" y="271.41" width="1.5" height="1.05" fill="#c9d1d9"/><rect x="24.9" y="271.41" width="3.1" height="1.05" fill="#d2a8ff"/><rect x="28.7" y="271.41" width="1.5" height="1.05" fill="#79c0ff"/><rect x="25.6" y="272.94" width="4.6" height="1.05" fill="#79c0ff"/><rect x="31.0" y="272.94" width="1.5" height="1.05" fill="#ffa657"/><rect x="33.3" y="272.94" width="7.7" height="1.05" fill="#c9d1d9"/><rect x="41.8" y="272.94" width="2.3" height="1.05" fill="#c9d1d9"/><rect x="44.9" y="272.94" width="3.9" height="1.05" fill="#79c0ff"/><rect x="25.6" y="274.47" width="3.9" height="1.05" fill="#79c0ff"/><rect x="30.3" y="274.47" width="3.1" height="1.05" fill="#a5d6ff"/><rect x="34.1" y="274.47" width="2.3" height="1.05" fill="#ffa657"/><rect x="37.2" y="274.47" width="4.6" height="1.05" fill="#c9d1d9"/><rect x="42.6" y="274.47" width="3.1" height="1.05" fill="#c9d1d9"/><rect x="22.6" y="276.00" width="7.7" height="1.05" fill="#c9d1d9"/><rect x="31.0" y="276.00" width="9.2" height="1.05" fill="#d2a8ff"/><rect x="41.0" y="276.00" width="1.5" height="1.05" fill="#c9d1d9"/><rect x="43.3" y="276.00" width="1.5" height="1.05" fill="#79c0ff"/><rect x="16.4" y="277.53" width="6.2" height="1.05" fill="#ff7b72"/><rect x="23.3" y="277.53" width="6.2" height="1.05" fill="#c9d1d9"/><rect x="13.3" y="279.06" width="1.5" height="1.05" fill="#c9d1d9"/><rect x="15.6" y="279.06" width="7.7" height="1.05" fill="#a5d6ff"/><rect x="24.1" y="279.06" width="2.3" height="1.05" fill="#ff7b72"/><rect x="27.2" y="279.06" width="6.2" height="1.05" fill="#c9d1d9"/><rect x="34.1" y="279.06" width="6.2" height="1.05" fill="#a5d6ff"/><rect x="41.0" y="279.06" width="6.2" height="1.05" fill="#c9d1d9"/><rect x="16.4" y="280.59" width="4.6" height="1.05" fill="#d2a8ff"/><rect x="13.3" y="282.12" width="4.6" height="1.05" fill="#8b949e"/><rect x="18.7" y="282.12" width="7.7" height="1.05" fill="#8b949e"/><rect x="27.2" y="282.12" width="1.5" height="1.05" fill="#8b949e"/><rect x="10.2" y="283.65" width="3.9" height="1.05" fill="#c9d1d9"/><rect x="14.9" y="283.65" width="3.1" height="1.05" fill="#ff7b72"/><rect x="13.3" y="285.18" width="1.5" height="1.05" fill="#8b949e"/><rect x="15.6" y="285.18" width="1.5" height="1.05" fill="#ffa657"/><rect x="17.9" y="285.18" width="2.3" height="1.05" fill="#79c0ff"/><rect x="21.0" y="285.18" width="3.1" height="1.05" fill="#c9d1d9"/><rect x="24.9" y="285.18" width="1.5" height="1.05" fill="#a5d6ff"/><rect x="27.2" y="285.18" width="3.1" height="1.05" fill="#a5d6ff"/><rect x="7.2" y="286.71" width="2.3" height="1.05" fill="#79c0ff"/><rect x="10.2" y="286.71" width="2.3" height="1.05" fill="#8b949e"/><rect x="13.3" y="286.71" width="3.1" height="1.05" fill="#ffa657"/><rect x="17.2" y="286.71" width="9.2" height="1.05" fill="#ffa657"/><rect x="7.2" y="288.24" width="6.2" height="1.05" fill="#79c0ff"/><rect x="14.1" y="288.24" width="0.8" height="1.05" fill="#d2a8ff"/><rect x="1.0" y="289.77" width="3.9" height="1.05" fill="#d2a8ff"/><rect x="5.6" y="289.77" width="7.7" height="1.05" fill="#c9d1d9"/><rect x="14.1" y="289.77" width="3.1" height="1.05" fill="#d2a8ff"/><rect x="17.9" y="289.77" width="3.1" height="1.05" fill="#c9d1d9"/><rect x="21.8" y="289.77" width="9.2" height="1.05" fill="#ffa657"/><rect x="31.8" y="289.77" width="1.5" height="1.05" fill="#ffa657"/><rect x="34.1" y="289.77" width="0.8" height="1.05" fill="#c9d1d9"/><rect x="1.0" y="291.30" width="7.7" height="1.05" fill="#79c0ff"/><rect x="9.5" y="291.30" width="9.2" height="1.05" fill="#d2a8ff"/><rect x="19.5" y="291.30" width="3.1" height="1.05" fill="#a5d6ff"/><rect x="23.3" y="291.30" width="5.4" height="1.05" fill="#c9d1d9"/><rect x="1.0" y="294.36" width="7.7" height="1.05" fill="#8b949e"/><rect x="9.5" y="294.36" width="9.2" height="1.05" fill="#c9d1d9"/><rect x="19.5" y="294.36" width="3.1" height="1.05" fill="#8b949e"/><rect x="23.3" y="294.36" width="0.8" height="1.05" fill="#c9d1d9"/><rect x="1.0" y="297.42" width="4.6" height="1.05" fill="#d2a8ff"/><rect x="6.4" y="297.42" width="4.6" height="1.05" fill="#ffa657"/><rect x="11.8" y="297.42" width="3.9" height="1.05" fill="#c9d1d9"/><rect x="16.4" y="297.42" width="7.7" height="1.05" fill="#a5d6ff"/><rect x="4.1" y="300.48" width="9.2" height="1.05" fill="#d2a8ff"/><rect x="14.1" y="300.48" width="3.9" height="1.05" fill="#79c0ff"/><rect x="18.7" y="300.48" width="2.3" height="1.05" fill="#c9d1d9"/><rect x="21.8" y="300.48" width="3.1" height="1.05" fill="#ff7b72"/><rect x="25.6" y="300.48" width="6.2" height="1.05" fill="#a5d6ff"/><rect x="32.6" y="300.48" width="3.1" height="1.05" fill="#79c0ff"/><rect x="36.4" y="300.48" width="1.5" height="1.05" fill="#c9d1d9"/><rect x="1.0" y="302.01" width="2.3" height="1.05" fill="#c9d1d9"/><rect x="4.1" y="302.01" width="3.1" height="1.05" fill="#c9d1d9"/><rect x="7.9" y="302.01" width="3.9" height="1.05" fill="#79c0ff"/><rect x="12.6" y="302.01" width="6.2" height="1.05" fill="#d2a8ff"/><rect x="19.5" y="302.01" width="1.5" height="1.05" fill="#c9d1d9"/><rect x="1.0" y="303.54" width="6.2" height="1.05" fill="#d2a8ff"/><rect x="7.9" y="303.54" width="4.6" height="1.05" fill="#a5d6ff"/><rect x="13.3" y="303.54" width="4.6" height="1.05" fill="#d2a8ff"/><rect x="18.7" y="303.54" width="2.3" height="1.05" fill="#c9d1d9"/><rect x="1.0" y="306.60" width="3.1" height="1.05" fill="#c9d1d9"/><rect x="4.9" y="306.60" width="9.2" height="1.05" fill="#d2a8ff"/><rect x="14.9" y="306.60" width="3.1" height="1.05" fill="#ff7b72"/><rect x="4.1" y="308.13" width="7.7" height="1.05" fill="#79c0ff"/><rect x="12.6" y="308.13" width="3.1" height="1.05" fill="#a5d6ff"/><rect x="16.4" y="308.13" width="2.3" height="1.05" fill="#79c0ff"/><rect x="19.5" y="308.13" width="3.1" height="1.05" fill="#79c0ff"/><rect x="23.3" y="308.13" width="4.6" height="1.05" fill="#c9d1d9"/><rect x="28.7" y="308.13" width="1.5" height="1.05" fill="#ffa657"/><rect x="31.0" y="308.13" width="6.2" height="1.05" fill="#79c0ff"/><rect x="7.2" y="309.66" width="3.9" height="1.05" fill="#79c0ff"/><rect x="11.8" y="309.66" width="4.6" height="1.05" fill="#a5d6ff"/><rect x="17.2" y="309.66" width="6.2" height="1.05" fill="#c9d1d9"/><rect x="24.1" y="309.66" width="2.3" height="1.05" fill="#79c0ff"/><rect x="10.2" y="311.19" width="1.5" height="1.05" fill="#d2a8ff"/><rect x="12.5" y="311.19" width="2.3" height="1.05" fill="#c9d1d9"/><rect x="15.6" y="311.19" width="2.3" height="1.05" fill="#c9d1d9"/><rect x="7.2" y="312.72" width="7.7" height="1.05" fill="#8b949e"/><rect x="15.6" y="312.72" width="3.1" height="1.05" fill="#8b949e"/><rect x="19.5" y="312.72" width="2.3" height="1.05" fill="#8b949e"/><rect x="1.0" y="314.25" width="9.2" height="1.05" fill="#c9d1d9"/><rect x="11.0" y="314.25" width="2.3" height="1.05" fill="#ffa657"/><rect x="14.1" y="314.25" width="3.1" height="1.05" fill="#8b949e"/><rect x="17.9" y="314.25" width="3.9" height="1.05" fill="#d2a8ff"/><rect x="22.6" y="314.25" width="9.2" height="1.05" fill="#ff7b72"/><rect x="32.6" y="314.25" width="2.3" height="1.05" fill="#79c0ff"/><rect x="1.0" y="315.78" width="3.1" height="1.05" fill="#79c0ff"/><rect x="4.9" y="315.78" width="3.1" height="1.05" fill="#ffa657"/><rect x="8.7" y="315.78" width="1.5" height="1.05" fill="#a5d6ff"/><rect x="11.0" y="315.78" width="3.9" height="1.05" fill="#a5d6ff"/><rect x="1.0" y="317.31" width="2.3" height="1.05" fill="#79c0ff"/><rect x="4.1" y="317.31" width="3.1" height="1.05" fill="#ff7b72"/><rect x="7.9" y="317.31" width="2.3" height="1.05" fill="#d2a8ff"/><rect x="11.0" y="317.31" width="4.6" height="1.05" fill="#c9d1d9"/><rect x="16.4" y="317.31" width="1.5" height="1.05" fill="#ffa657"/><rect x="18.7" y="317.31" width="1.5" height="1.05" fill="#79c0ff"/><rect x="1.0" y="318.84" width="2.3" height="1.05" fill="#ff7b72"/><rect x="4.1" y="318.84" width="6.2" height="1.05" fill="#d2a8ff"/><rect x="11.0" y="318.84" width="3.9" height="1.05" fill="#ffa657"/><rect x="15.6" y="318.84" width="3.9" height="1.05" fill="#ffa657"/><rect x="20.2" y="318.84" width="6.2" height="1.05" fill="#c9d1d9"/><rect x="27.2" y="318.84" width="3.9" height="1.05" fill="#c9d1d9"/><rect x="31.8" y="318.84" width="3.1" height="1.05" fill="#ff7b72"/><rect x="1.0" y="320.37" width="4.6" height="1.05" fill="#79c0ff"/><rect x="1.0" y="321.90" width="7.7" height="1.05" fill="#79c0ff"/><rect x="9.5" y="321.90" width="3.9" height="1.05" fill="#79c0ff"/><rect x="14.1" y="321.90" width="0.8" height="1.05" fill="#c9d1d9"/><rect x="1.0" y="323.43" width="4.6" height="1.05" fill="#a5d6ff"/><rect x="6.4" y="323.43" width="4.6" height="1.05" fill="#a5d6ff"/><rect x="11.8" y="323.43" width="1.5" height="1.05" fill="#79c0ff"/><rect x="14.1" y="323.43" width="4.6" height="1.05" fill="#c9d1d9"/><rect x="19.5" y="323.43" width="1.5" height="1.05" fill="#c9d1d9"/><rect x="1.0" y="324.96" width="2.3" height="1.05" fill="#d2a8ff"/><rect x="4.1" y="324.96" width="1.5" height="1.05" fill="#8b949e"/><rect x="4.1" y="326.49" width="6.2" height="1.05" fill="#d2a8ff"/><rect x="11.0" y="326.49" width="2.3" height="1.05" fill="#ffa657"/><rect x="14.1" y="326.49" width="0.8" height="1.05" fill="#ffa657"/><rect x="4.1" y="328.02" width="3.9" height="1.05" fill="#ffa657"/><rect x="8.7" y="328.02" width="4.6" height="1.05" fill="#79c0ff"/><rect x="14.1" y="328.02" width="2.3" height="1.05" fill="#8b949e"/><rect x="17.2" y="328.02" width="1.5" height="1.05" fill="#ff7b72"/><rect x="19.5" y="328.02" width="4.6" height="1.05" fill="#ff7b72"/><rect x="1.0" y="329.55" width="3.9" height="1.05" fill="#79c0ff"/><rect x="5.6" y="329.55" width="6.2" height="1.05" fill="#c9d1d9"/><rect x="1.0" y="331.08" width="6.2" height="1.05" fill="#ff7b72"/><rect x="7.9" y="331.08" width="3.9" height="1.05" fill="#c9d1d9"/><rect x="4.1" y="332.61" width="2.3" height="1.05" fill="#c9d1d9"/><rect x="7.2" y="332.61" width="3.1" height="1.05" fill="#d2a8ff"/><rect x="11.0" y="332.61" width="3.1" height="1.05" fill="#c9d1d9"/><rect x="14.9" y="332.61" width="1.5" height="1.05" fill="#d2a8ff"/><rect x="17.2" y="332.61" width="4.6" height="1.05" fill="#c9d1d9"/><rect x="22.6" y="332.61" width="3.1" height="1.05" fill="#a5d6ff"/><rect x="26.4" y="332.61" width="2.3" height="1.05" fill="#c9d1d9"/><rect x="29.5" y="332.61" width="2.3" height="1.05" fill="#79c0ff"/><rect x="7.2" y="334.14" width="4.6" height="1.05" fill="#8b949e"/><rect x="12.5" y="334.14" width="3.1" height="1.05" fill="#8b949e"/><rect x="16.4" y="334.14" width="3.1" height="1.05" fill="#8b949e"/><rect x="20.2" y="334.14" width="6.2" height="1.05" fill="#8b949e"/><rect x="27.2" y="334.14" width="2.3" height="1.05" fill="#8b949e"/><rect x="30.3" y="334.14" width="4.6" height="1.05" fill="#8b949e"/><rect x="35.6" y="334.14" width="9.2" height="1.05" fill="#8b949e"/><rect x="45.7" y="334.14" width="9.2" height="1.05" fill="#8b949e"/><rect x="55.7" y="334.14" width="6.2" height="1.05" fill="#8b949e"/><rect x="4.1" y="335.67" width="1.5" height="1.05" fill="#8b949e"/><rect x="6.4" y="335.67" width="7.7" height="1.05" fill="#79c0ff"/><rect x="14.9" y="335.67" width="1.5" height="1.05" fill="#c9d1d9"/><rect x="17.2" y="335.67" width="3.1" height="1.05" fill="#ff7b72"/><rect x="21.0" y="335.67" width="3.1" height="1.05" fill="#ffa657"/><rect x="24.9" y="335.67" width="3.9" height="1.05" fill="#ff7b72"/><rect x="29.5" y="335.67" width="1.5" height="1.05" fill="#c9d1d9"/><rect x="1.0" y="337.20" width="3.1" height="1.05" fill="#c9d1d9"/><rect x="4.9" y="337.20" width="1.5" height="1.05" fill="#79c0ff"/><rect x="7.2" y="337.20" width="1.5" height="1.05" fill="#ff7b72"/><rect x="4.1" y="338.73" width="9.2" height="1.05" fill="#c9d1d9"/><rect x="14.1" y="338.73" width="6.2" height="1.05" fill="#79c0ff"/><rect x="21.0" y="338.73" width="6.2" height="1.05" fill="#79c0ff"/><rect x="27.9" y="338.73" width="7.7" height="1.05" fill="#ffa657"/><rect x="36.4" y="338.73" width="1.5" height="1.05" fill="#c9d1d9"/><rect x="7.2" y="340.26" width="3.1" height="1.05" fill="#8b949e"/><rect x="11.0" y="340.26" width="4.6" height="1.05" fill="#79c0ff"/><rect x="16.4" y="340.26" width="4.6" height="1.05" fill="#c9d1d9"/><rect x="4.1" y="341.79" width="2.3" height="1.05" fill="#ff7b72"/><rect x="7.2" y="341.79" width="6.2" height="1.05" fill="#8b949e"/><rect x="14.1" y="341.79" width="2.3" height="1.05" fill="#8b949e"/><rect x="17.2" y="341.79" width="6.9" height="1.05" fill="#ff7b72"/><rect x="4.1" y="343.32" width="9.2" height="1.05" fill="#ff7b72"/><rect x="14.1" y="343.32" width="2.3" height="1.05" fill="#c9d1d9"/><rect x="17.2" y="343.32" width="9.2" height="1.05" fill="#8b949e"/><rect x="27.2" y="343.32" width="1.5" height="1.05" fill="#79c0ff"/><rect x="29.5" y="343.32" width="1.5" height="1.05" fill="#c9d1d9"/><rect x="1.0" y="344.85" width="7.7" height="1.05" fill="#8b949e"/><rect x="9.5" y="344.85" width="1.5" height="1.05" fill="#8b949e"/><rect x="11.8" y="344.85" width="4.6" height="1.05" fill="#8b949e"/><rect x="4.1" y="346.38" width="1.5" height="1.05" fill="#d2a8ff"/><rect x="6.4" y="346.38" width="5.4" height="1.05" fill="#8b949e"/><rect x="7.2" y="347.91" width="3.9" height="1.05" fill="#c9d1d9"/><rect x="11.8" y="347.91" width="9.2" height="1.05" fill="#c9d1d9"/><rect x="21.8" y="347.91" width="3.1" height="1.05" fill="#c9d1d9"/><rect x="25.6" y="347.91" width="4.6" height="1.05" fill="#c9d1d9"/><rect x="31.0" y="347.91" width="3.1" height="1.05" fill="#d2a8ff"/><rect x="34.9" y="347.91" width="6.2" height="1.05" fill="#c9d1d9"/><rect x="7.2" y="349.44" width="6.2" height="1.05" fill="#8b949e"/><rect x="14.1" y="349.44" width="8.5" height="1.05" fill="#8b949e"/><rect x="7.2" y="350.97" width="2.3" height="1.05" fill="#79c0ff"/><rect x="10.2" y="350.97" width="2.3" height="1.05" fill="#c9d1d9"/><rect x="13.3" y="350.97" width="4.6" height="1.05" fill="#ffa657"/><rect x="18.7" y="350.97" width="4.6" height="1.05" fill="#c9d1d9"/><rect x="24.1" y="350.97" width="3.1" height="1.05" fill="#a5d6ff"/><rect x="28.0" y="350.97" width="2.3" height="1.05" fill="#a5d6ff"/><rect x="7.2" y="352.50" width="4.6" height="1.05" fill="#ffa657"/><rect x="7.2" y="354.03" width="9.2" height="1.05" fill="#c9d1d9"/><rect x="17.2" y="354.03" width="6.9" height="1.05" fill="#c9d1d9"/><rect x="7.2" y="357.09" width="2.3" height="1.05" fill="#79c0ff"/><rect x="10.2" y="357.09" width="7.7" height="1.05" fill="#c9d1d9"/><rect x="18.7" y="357.09" width="2.3" height="1.05" fill="#c9d1d9"/><rect x="7.2" y="358.62" width="2.3" height="1.05" fill="#8b949e"/><rect x="10.2" y="358.62" width="6.2" height="1.05" fill="#8b949e"/><rect x="17.2" y="358.62" width="6.2" height="1.05" fill="#8b949e"/><rect x="24.1" y="358.62" width="1.5" height="1.05" fill="#8b949e"/><rect x="26.4" y="358.62" width="1.5" height="1.05" fill="#8b949e"/><rect x="28.7" y="358.62" width="4.6" height="1.05" fill="#8b949e"/><rect x="34.1" y="358.62" width="4.6" height="1.05" fill="#8b949e"/><rect x="39.5" y="358.62" width="9.2" height="1.05" fill="#8b949e"/><rect x="49.5" y="358.62" width="1.5" height="1.05" fill="#8b949e"/><rect x="51.8" y="358.62" width="6.2" height="1.05" fill="#8b949e"/><rect x="58.7" y="358.62" width="2.3" height="1.05" fill="#8b949e"/><rect x="10.2" y="360.15" width="2.3" height="1.05" fill="#79c0ff"/><rect x="13.3" y="360.15" width="1.5" height="1.05" fill="#8b949e"/><rect x="15.6" y="360.15" width="3.9" height="1.05" fill="#c9d1d9"/><rect x="20.2" y="360.15" width="3.9" height="1.05" fill="#a5d6ff"/><rect x="24.9" y="360.15" width="6.2" height="1.05" fill="#c9d1d9"/><rect x="31.8" y="360.15" width="6.2" height="1.05" fill="#c9d1d9"/><rect x="7.2" y="361.68" width="7.7" height="1.05" fill="#8b949e"/><rect x="15.6" y="361.68" width="3.9" height="1.05" fill="#8b949e"/><rect x="20.2" y="361.68" width="7.7" height="1.05" fill="#8b949e"/><rect x="28.7" y="361.68" width="3.9" height="1.05" fill="#8b949e"/><rect x="33.3" y="361.68" width="9.2" height="1.05" fill="#8b949e"/><rect x="43.4" y="361.68" width="2.3" height="1.05" fill="#8b949e"/><rect x="46.4" y="361.68" width="2.3" height="1.05" fill="#8b949e"/><rect x="49.5" y="361.68" width="7.7" height="1.05" fill="#8b949e"/><rect x="58.0" y="361.68" width="3.1" height="1.05" fill="#8b949e"/><rect x="4.1" y="363.21" width="4.6" height="1.05" fill="#a5d6ff"/><rect x="9.5" y="363.21" width="7.7" height="1.05" fill="#ff7b72"/><rect x="17.9" y="363.21" width="2.3" height="1.05" fill="#c9d1d9"/><rect x="21.0" y="363.21" width="3.1" height="1.05" fill="#ff7b72"/><rect x="24.9" y="363.21" width="3.1" height="1.05" fill="#79c0ff"/><rect x="28.7" y="363.21" width="4.6" height="1.05" fill="#a5d6ff"/><rect x="34.1" y="363.21" width="3.9" height="1.05" fill="#c9d1d9"/><rect x="4.1" y="364.74" width="4.6" height="1.05" fill="#d2a8ff"/><rect x="4.1" y="366.27" width="1.5" height="1.05" fill="#79c0ff"/><rect x="6.4" y="366.27" width="2.3" height="1.05" fill="#ff7b72"/><rect x="9.5" y="366.27" width="4.6" height="1.05" fill="#8b949e"/><rect x="14.9" y="366.27" width="6.2" height="1.05" fill="#79c0ff"/><rect x="4.1" y="367.80" width="3.9" height="1.05" fill="#a5d6ff"/><rect x="8.7" y="367.80" width="7.7" height="1.05" fill="#ff7b72"/><rect x="17.2" y="367.80" width="0.8" height="1.05" fill="#a5d6ff"/><rect x="7.2" y="369.33" width="7.7" height="1.05" fill="#8b949e"/><rect x="15.6" y="369.33" width="2.3" height="1.05" fill="#8b949e"/><rect x="18.7" y="369.33" width="7.7" height="1.05" fill="#8b949e"/><rect x="27.2" y="369.33" width="9.2" height="1.05" fill="#8b949e"/><rect x="37.2" y="369.33" width="2.3" height="1.05" fill="#8b949e"/><rect x="40.3" y="369.33" width="3.9" height="1.05" fill="#8b949e"/><rect x="44.9" y="369.33" width="3.9" height="1.05" fill="#8b949e"/><rect x="49.5" y="369.33" width="9.2" height="1.05" fill="#8b949e"/><rect x="59.5" y="369.33" width="6.2" height="1.05" fill="#8b949e"/><rect x="10.2" y="370.86" width="3.9" height="1.05" fill="#8b949e"/><rect x="14.9" y="370.86" width="4.6" height="1.05" fill="#8b949e"/><rect x="20.2" y="370.86" width="1.5" height="1.05" fill="#8b949e"/><rect x="22.6" y="370.86" width="2.3" height="1.05" fill="#8b949e"/><rect x="25.6" y="370.86" width="4.6" height="1.05" fill="#8b949e"/><rect x="31.0" y="370.86" width="9.2" height="1.05" fill="#8b949e"/><rect x="41.0" y="370.86" width="3.9" height="1.05" fill="#8b949e"/><rect x="45.7" y="370.86" width="6.2" height="1.05" fill="#8b949e"/><rect x="52.6" y="370.86" width="7.7" height="1.05" fill="#8b949e"/><rect x="61.1" y="370.86" width="3.9" height="1.05" fill="#8b949e"/><rect x="7.2" y="372.39" width="2.3" height="1.05" fill="#8b949e"/><rect x="10.2" y="372.39" width="9.2" height="1.05" fill="#79c0ff"/><rect x="20.2" y="372.39" width="9.2" height="1.05" fill="#ffa657"/><rect x="7.2" y="373.92" width="2.3" height="1.05" fill="#c9d1d9"/><rect x="10.2" y="373.92" width="4.6" height="1.05" fill="#c9d1d9"/><rect x="15.6" y="373.92" width="9.2" height="1.05" fill="#ffa657"/><rect x="25.6" y="373.92" width="3.9" height="1.05" fill="#c9d1d9"/><rect x="10.2" y="375.45" width="6.2" height="1.05" fill="#a5d6ff"/><rect x="17.2" y="375.45" width="7.7" height="1.05" fill="#ff7b72"/><rect x="25.6" y="375.45" width="7.7" height="1.05" fill="#c9d1d9"/><rect x="34.1" y="375.45" width="7.7" height="1.05" fill="#c9d1d9"/><rect x="42.6" y="375.45" width="1.5" height="1.05" fill="#a5d6ff"/><rect x="7.2" y="376.98" width="7.7" height="1.05" fill="#ff7b72"/><rect x="15.6" y="376.98" width="5.4" height="1.05" fill="#a5d6ff"/><rect x="10.2" y="380.04" width="6.2" height="1.05" fill="#c9d1d9"/><rect x="17.2" y="380.04" width="0.8" height="1.05" fill="#c9d1d9"/><rect x="13.3" y="381.57" width="1.5" height="1.05" fill="#79c0ff"/><rect x="15.6" y="381.57" width="6.2" height="1.05" fill="#79c0ff"/><rect x="22.6" y="381.57" width="1.5" height="1.05" fill="#c9d1d9"/><rect x="24.9" y="381.57" width="6.2" height="1.05" fill="#79c0ff"/><rect x="31.8" y="381.57" width="4.6" height="1.05" fill="#c9d1d9"/><rect x="16.4" y="383.10" width="4.6" height="1.05" fill="#ffa657"/><rect x="21.8" y="383.10" width="3.1" height="1.05" fill="#d2a8ff"/><rect x="25.6" y="383.10" width="1.5" height="1.05" fill="#8b949e"/><rect x="27.9" y="383.10" width="9.2" height="1.05" fill="#79c0ff"/><rect x="38.0" y="383.10" width="6.2" height="1.05" fill="#a5d6ff"/><rect x="19.5" y="386.16" width="4.6" height="1.05" fill="#79c0ff"/><rect x="19.5" y="387.69" width="4.6" height="1.05" fill="#79c0ff"/><rect x="24.9" y="387.69" width="6.2" height="1.05" fill="#a5d6ff"/><rect x="31.8" y="387.69" width="1.5" height="1.05" fill="#79c0ff"/><rect x="13.3" y="389.22" width="3.9" height="1.05" fill="#c9d1d9"/><rect x="17.9" y="389.22" width="3.1" height="1.05" fill="#ff7b72"/><rect x="21.8" y="389.22" width="2.3" height="1.05" fill="#d2a8ff"/><rect x="24.9" y="389.22" width="1.5" height="1.05" fill="#c9d1d9"/><rect x="27.2" y="389.22" width="3.1" height="1.05" fill="#ff7b72"/><rect x="7.2" y="390.75" width="3.9" height="1.05" fill="#a5d6ff"/><rect x="11.8" y="390.75" width="6.2" height="1.05" fill="#c9d1d9"/><rect x="18.7" y="390.75" width="5.4" height="1.05" fill="#c9d1d9"/><rect x="7.2" y="392.28" width="4.6" height="1.05" fill="#a5d6ff"/><rect x="4.1" y="393.81" width="6.2" height="1.05" fill="#79c0ff"/><rect x="11.0" y="393.81" width="6.2" height="1.05" fill="#8b949e"/><rect x="4.1" y="395.34" width="3.1" height="1.05" fill="#8b949e"/><rect x="7.9" y="395.34" width="6.2" height="1.05" fill="#a5d6ff"/><rect x="4.1" y="396.87" width="3.9" height="1.05" fill="#8b949e"/><rect x="8.7" y="396.87" width="6.2" height="1.05" fill="#ff7b72"/><rect x="15.6" y="396.87" width="3.9" height="1.05" fill="#8b949e"/><rect x="20.2" y="396.87" width="1.5" height="1.05" fill="#d2a8ff"/><rect x="22.6" y="396.87" width="1.5" height="1.05" fill="#d2a8ff"/><rect x="7.2" y="398.40" width="7.7" height="1.05" fill="#d2a8ff"/><rect x="15.6" y="398.40" width="2.3" height="1.05" fill="#ffa657"/><rect x="18.7" y="398.40" width="1.5" height="1.05" fill="#a5d6ff"/><rect x="21.0" y="398.40" width="3.1" height="1.05" fill="#79c0ff"/><rect x="24.9" y="398.40" width="4.6" height="1.05" fill="#ff7b72"/><rect x="30.3" y="398.40" width="3.1" height="1.05" fill="#c9d1d9"/><rect x="34.1" y="398.40" width="0.8" height="1.05" fill="#8b949e"/><rect x="7.2" y="399.93" width="4.6" height="1.05" fill="#ff7b72"/><rect x="10.2" y="401.46" width="6.2" height="1.05" fill="#c9d1d9"/><rect x="17.2" y="401.46" width="7.7" height="1.05" fill="#a5d6ff"/><rect x="25.6" y="401.46" width="3.1" height="1.05" fill="#c9d1d9"/><rect x="29.5" y="401.46" width="3.1" height="1.05" fill="#d2a8ff"/><rect x="33.3" y="401.46" width="3.1" height="1.05" fill="#d2a8ff"/><rect x="37.2" y="401.46" width="9.2" height="1.05" fill="#79c0ff"/><rect x="47.2" y="401.46" width="3.9" height="1.05" fill="#c9d1d9"/><rect x="51.8" y="401.46" width="9.2" height="1.05" fill="#79c0ff"/><rect x="61.8" y="401.46" width="3.9" height="1.05" fill="#ffa657"/><rect x="7.2" y="402.99" width="3.9" height="1.05" fill="#c9d1d9"/><rect x="11.8" y="402.99" width="1.5" height="1.05" fill="#c9d1d9"/><rect x="14.1" y="402.99" width="4.6" height="1.05" fill="#ffa657"/><rect x="19.5" y="402.99" width="1.5" height="1.05" fill="#ff7b72"/><rect x="21.8" y="402.99" width="9.2" height="1.05" fill="#c9d1d9"/><rect x="31.8" y="402.99" width="3.9" height="1.05" fill="#c9d1d9"/><rect x="36.4" y="402.99" width="4.6" height="1.05" fill="#c9d1d9"/><rect x="7.2" y="404.52" width="3.9" height="1.05" fill="#a5d6ff"/><rect x="11.8" y="404.52" width="3.9" height="1.05" fill="#d2a8ff"/><rect x="16.4" y="404.52" width="2.3" height="1.05" fill="#c9d1d9"/><rect x="19.5" y="404.52" width="6.2" height="1.05" fill="#79c0ff"/><rect x="26.4" y="404.52" width="3.9" height="1.05" fill="#79c0ff"/><rect x="4.1" y="406.05" width="2.3" height="1.05" fill="#79c0ff"/><rect x="7.2" y="406.05" width="2.3" height="1.05" fill="#ff7b72"/><rect x="10.2" y="406.05" width="3.1" height="1.05" fill="#ffa657"/><rect x="14.1" y="406.05" width="2.3" height="1.05" fill="#8b949e"/><rect x="17.2" y="406.05" width="7.7" height="1.05" fill="#a5d6ff"/><rect x="25.6" y="406.05" width="1.5" height="1.05" fill="#a5d6ff"/><rect x="28.0" y="406.05" width="3.1" height="1.05" fill="#d2a8ff"/><rect x="31.8" y="406.05" width="6.2" height="1.05" fill="#c9d1d9"/><rect x="4.1" y="407.58" width="6.2" height="1.05" fill="#a5d6ff"/><rect x="11.0" y="407.58" width="1.5" height="1.05" fill="#ff7b72"/><rect x="13.3" y="407.58" width="3.9" height="1.05" fill="#c9d1d9"/><rect x="17.9" y="407.58" width="2.3" height="1.05" fill="#c9d1d9"/><rect x="21.0" y="407.58" width="4.6" height="1.05" fill="#c9d1d9"/><rect x="26.4" y="407.58" width="3.1" height="1.05" fill="#79c0ff"/><rect x="30.3" y="407.58" width="1.5" height="1.05" fill="#79c0ff"/><rect x="7.2" y="409.11" width="1.5" height="1.05" fill="#c9d1d9"/><rect x="9.5" y="409.11" width="1.5" height="1.05" fill="#79c0ff"/><rect x="11.8" y="409.11" width="3.9" height="1.05" fill="#ff7b72"/><rect x="16.4" y="409.11" width="3.1" height="1.05" fill="#8b949e"/><rect x="20.2" y="409.11" width="0.8" height="1.05" fill="#c9d1d9"/><rect x="7.2" y="410.64" width="1.5" height="1.05" fill="#ff7b72"/><rect x="9.5" y="410.64" width="4.6" height="1.05" fill="#ffa657"/><rect x="14.9" y="410.64" width="4.6" height="1.05" fill="#ffa657"/><rect x="20.2" y="410.64" width="3.1" height="1.05" fill="#ffa657"/><rect x="24.1" y="410.64" width="3.1" height="1.05" fill="#ff7b72"/><rect x="10.2" y="412.17" width="2.3" height="1.05" fill="#c9d1d9"/><rect x="13.3" y="412.17" width="3.1" height="1.05" fill="#c9d1d9"/><rect x="17.2" y="412.17" width="6.9" height="1.05" fill="#c9d1d9"/><rect x="10.2" y="413.70" width="7.7" height="1.05" fill="#c9d1d9"/><rect x="7.2" y="415.23" width="4.6" height="1.05" fill="#ff7b72"/><rect x="12.5" y="415.23" width="2.3" height="1.05" fill="#ff7b72"/><rect x="15.6" y="415.23" width="6.2" height="1.05" fill="#a5d6ff"/><rect x="22.6" y="415.23" width="6.2" height="1.05" fill="#79c0ff"/><rect x="29.5" y="415.23" width="0.8" height="1.05" fill="#ffa657"/><rect x="10.2" y="416.76" width="1.5" height="1.05" fill="#8b949e"/><rect x="12.5" y="416.76" width="3.9" height="1.05" fill="#8b949e"/><rect x="17.2" y="416.76" width="3.9" height="1.05" fill="#8b949e"/><rect x="10.2" y="418.29" width="7.7" height="1.05" fill="#8b949e"/><rect x="18.7" y="418.29" width="6.9" height="1.05" fill="#8b949e"/><rect x="13.3" y="419.82" width="6.2" height="1.05" fill="#ff7b72"/><rect x="20.2" y="419.82" width="6.2" height="1.05" fill="#d2a8ff"/><rect x="27.2" y="419.82" width="3.1" height="1.05" fill="#c9d1d9"/><rect x="31.0" y="419.82" width="3.1" height="1.05" fill="#a5d6ff"/><rect x="34.9" y="419.82" width="1.5" height="1.05" fill="#ff7b72"/><rect x="16.4" y="421.35" width="1.5" height="1.05" fill="#79c0ff"/><rect x="18.7" y="421.35" width="6.2" height="1.05" fill="#a5d6ff"/><rect x="25.6" y="421.35" width="1.5" height="1.05" fill="#a5d6ff"/><rect x="19.5" y="422.88" width="7.7" height="1.05" fill="#c9d1d9"/><rect x="28.0" y="422.88" width="2.3" height="1.05" fill="#79c0ff"/><rect x="31.0" y="422.88" width="2.3" height="1.05" fill="#d2a8ff"/><rect x="22.6" y="424.41" width="7.7" height="1.05" fill="#a5d6ff"/><rect x="31.0" y="424.41" width="2.3" height="1.05" fill="#ffa657"/><rect x="34.1" y="424.41" width="1.5" height="1.05" fill="#8b949e"/><rect x="36.4" y="424.41" width="4.6" height="1.05" fill="#ff7b72"/><rect x="41.8" y="424.41" width="1.5" height="1.05" fill="#c9d1d9"/><rect x="44.1" y="424.41" width="1.5" height="1.05" fill="#ff7b72"/><rect x="16.4" y="425.94" width="3.1" height="1.05" fill="#79c0ff"/><rect x="20.2" y="425.94" width="7.7" height="1.05" fill="#c9d1d9"/><rect x="28.7" y="425.94" width="2.3" height="1.05" fill="#ff7b72"/><rect x="31.8" y="425.94" width="1.5" height="1.05" fill="#c9d1d9"/><rect x="19.5" y="427.47" width="3.1" height="1.05" fill="#ffa657"/><rect x="23.3" y="427.47" width="3.9" height="1.05" fill="#c9d1d9"/><rect x="22.6" y="429.00" width="6.2" height="1.05" fill="#a5d6ff"/><rect x="29.5" y="429.00" width="4.6" height="1.05" fill="#c9d1d9"/><rect x="34.9" y="429.00" width="9.2" height="1.05" fill="#c9d1d9"/><rect x="44.9" y="429.00" width="0.8" height="1.05" fill="#c9d1d9"/><rect x="16.4" y="430.53" width="4.6" height="1.05" fill="#8b949e"/><rect x="21.8" y="430.53" width="3.9" height="1.05" fill="#8b949e"/><rect x="26.4" y="430.53" width="5.4" height="1.05" fill="#8b949e"/><rect x="16.4" y="432.06" width="1.5" height="1.05" fill="#c9d1d9"/><rect x="18.7" y="432.06" width="3.1" height="1.05" fill="#c9d1d9"/><rect x="22.6" y="432.06" width="3.9" height="1.05" fill="#79c0ff"/><rect x="27.2" y="432.06" width="4.6" height="1.05" fill="#c9d1d9"/><rect x="32.6" y="432.06" width="0.8" height="1.05" fill="#79c0ff"/><rect x="16.4" y="433.59" width="1.5" height="1.05" fill="#c9d1d9"/><rect x="18.7" y="433.59" width="4.6" height="1.05" fill="#8b949e"/><rect x="24.1" y="433.59" width="1.5" height="1.05" fill="#d2a8ff"/><rect x="26.4" y="433.59" width="7.7" height="1.05" fill="#c9d1d9"/><rect x="34.9" y="433.59" width="9.2" height="1.05" fill="#79c0ff"/><rect x="44.9" y="433.59" width="9.2" height="1.05" fill="#8b949e"/><rect x="54.9" y="433.59" width="7.7" height="1.05" fill="#c9d1d9"/><rect x="16.4" y="435.12" width="3.1" height="1.05" fill="#c9d1d9"/><rect x="20.2" y="435.12" width="3.1" height="1.05" fill="#a5d6ff"/><rect x="24.1" y="435.12" width="3.1" height="1.05" fill="#ff7b72"/><rect x="28.0" y="435.12" width="7.7" height="1.05" fill="#ffa657"/><rect x="36.4" y="435.12" width="3.1" height="1.05" fill="#79c0ff"/><rect x="40.3" y="435.12" width="3.9" height="1.05" fill="#a5d6ff"/><rect x="16.4" y="436.65" width="1.5" height="1.05" fill="#79c0ff"/><rect x="18.7" y="436.65" width="2.3" height="1.05" fill="#c9d1d9"/><rect x="16.4" y="438.18" width="1.5" height="1.05" fill="#ff7b72"/><rect x="18.7" y="438.18" width="9.2" height="1.05" fill="#c9d1d9"/><rect x="28.7" y="438.18" width="2.3" height="1.05" fill="#ff7b72"/><rect x="31.8" y="438.18" width="3.1" height="1.05" fill="#d2a8ff"/><rect x="35.6" y="438.18" width="0.8" height="1.05" fill="#79c0ff"/><rect x="13.3" y="439.71" width="6.2" height="1.05" fill="#c9d1d9"/><rect x="20.2" y="439.71" width="7.7" height="1.05" fill="#79c0ff"/><rect x="28.7" y="439.71" width="3.9" height="1.05" fill="#ff7b72"/><rect x="13.3" y="441.24" width="4.6" height="1.05" fill="#ffa657"/><rect x="18.7" y="441.24" width="9.2" height="1.05" fill="#c9d1d9"/><rect x="28.7" y="441.24" width="1.5" height="1.05" fill="#8b949e"/></g></svg>
<div class="abs" style="left:1013px;top:93.00px;width:11px;height:442.75px;background:#0b0f14"></div>
<div class="abs" style="left:1013px;top:378.4px;width:11px;height:26.6px;background:#272c34"></div>
<div class="abs" style="left:1013.6px;top:293px;width:10.4px;height:2.1px;background:#2c67b8"></div>
<div class="abs" style="left:1016.8px;top:292.1px;width:4.4px;height:4px;background:#bcbcbc"></div>
<div class="abs" style="left:1016.8px;top:299.3px;width:4.4px;height:4.2px;background:#bcbcbc"></div>
<svg style="left:708.50px;top:412.00px" width="6.00" height="12.00" viewBox="0 0 6 12" ><path d="M1 0.5 Q3 0.5 3 2 V10 Q3 11.5 1 11.5 M5 0.5 Q3 0.5 3 2 M3 10 Q3 11.5 5 11.5" fill="none" stroke="#1f4b57" stroke-width="0.9"/></svg>
<div class="abs" style="left:0;top:536.25px;width:49.5px;height:16.25px;background:#2c3239"></div>
<svg style="left:0.00px;top:539.00px" width="11.00" height="11.00" viewBox="0 0 11 11" ><path d="M1.3 2.9 L5.3 6.3 L1.3 9.7 M9.5 1.3 L6.1 3.5 L9.5 5.7" fill="none" stroke="#e6edf3" stroke-width="1.05"/></svg>
<span class="t" style="left:14.20px;top:537.40px;font-size:9.30px;color:#e6edf3;transform:scaleX(1.0125);">GitHub</span>
<svg style="left:56.50px;top:539.00px" width="10.00" height="12.00" viewBox="0 0 10 12" ><circle cx="2.4" cy="2.1" r="1.5" fill="none" stroke="#8b949e" stroke-width="0.8"/><circle cx="2.4" cy="9.7" r="1.5" fill="none" stroke="#8b949e" stroke-width="0.8"/><circle cx="7.6" cy="3.8" r="1.5" fill="none" stroke="#8b949e" stroke-width="0.8"/><path d="M2.4 3.6 V8.2 M7.6 5.3 Q7.5 7 5.6 7 H2.5" fill="none" stroke="#8b949e" stroke-width="0.8"/></svg>
<span class="t" style="left:70.00px;top:537.40px;font-size:9.30px;color:#8b949e;transform:scaleX(0.9922);">main</span>
<svg style="left:96.00px;top:539.30px" width="11.00" height="11.00" viewBox="0 0 11 11" ><path d="M8.9 2.6 A4.3 4.3 0 0 0 0.9 5.9 M1.5 8.2 A4.3 4.3 0 0 0 9.5 4.9" fill="none" stroke="#8b949e" stroke-width="0.9"/><path d="M9.2 1 V2.9 H7.3 M1.2 9.8 V7.9 H3.1" fill="none" stroke="#8b949e" stroke-width="0.9"/></svg>
<svg style="left:119.75px;top:539.00px" width="12.00" height="12.00" viewBox="0 0 12 12" ><circle cx="5.6" cy="5.6" r="4.9" fill="none" stroke="#8b949e" stroke-width="0.8"/><path d="M3.7 3.7 L7.5 7.5 M7.5 3.7 L3.7 7.5" stroke="#8b949e" stroke-width="0.8"/></svg>
<span class="t" style="left:134.00px;top:537.40px;font-size:9.30px;color:#8b949e;transform:scaleX(1.0054);">0</span>
<svg style="left:141.50px;top:539.00px" width="13.00" height="12.00" viewBox="0 0 13 12" ><path d="M6 0.9 L11.5 10.4 H0.5 Z" fill="none" stroke="#8b949e" stroke-width="0.8" stroke-linejoin="round"/><path d="M6 4 V7.4 M6 8.4 V9.3" stroke="#8b949e" stroke-width="0.8"/></svg>
<span class="t" style="left:155.75px;top:537.40px;font-size:9.30px;color:#8b949e;transform:scaleX(1.0151);">0</span>
<span class="t" style="left:701.70px;top:537.40px;font-size:9.30px;color:#8b949e;transform:scaleX(0.9440);">Ln 223, Col 40</span>
<span class="t" style="left:771.10px;top:537.40px;font-size:9.30px;color:#8b949e;transform:scaleX(0.8922);">Spaces: 4</span>
<span class="t" style="left:820.70px;top:537.40px;font-size:9.30px;color:#8b949e;transform:scaleX(0.9034);">UTF-8</span>
<span class="t" style="left:856.80px;top:537.40px;font-size:9.30px;color:#8b949e;transform:scaleX(0.8104);">LF</span>
<span class="t" style="left:879.20px;top:537.00px;font-size:9.30px;color:#8b949e;transform:scaleX(1.1254);">{ }</span>
<span class="t" style="left:895.00px;top:537.40px;font-size:9.30px;color:#8b949e;transform:scaleX(0.9403);">TypeScript</span>
<span class="t" style="left:949.10px;top:537.40px;font-size:9.30px;color:#8b949e;transform:scaleX(0.9109);">Layout: US</span>
<svg style="left:1005.00px;top:538.80px" width="12.00" height="12.00" viewBox="0 0 12 12" ><path d="M5.2 1.4 Q2.2 1.8 2.2 5 V7.6 L1 9.2 H9.6 L8.4 7.6 V6.4" fill="none" stroke="#aab2bb" stroke-width="0.85" stroke-linejoin="round"/><path d="M4 9.4 Q5.3 11.4 6.6 9.4" fill="none" stroke="#aab2bb" stroke-width="0.8"/><circle cx="8.4" cy="3" r="2.2" fill="#c9d1d9"/></svg>
</body></html>
